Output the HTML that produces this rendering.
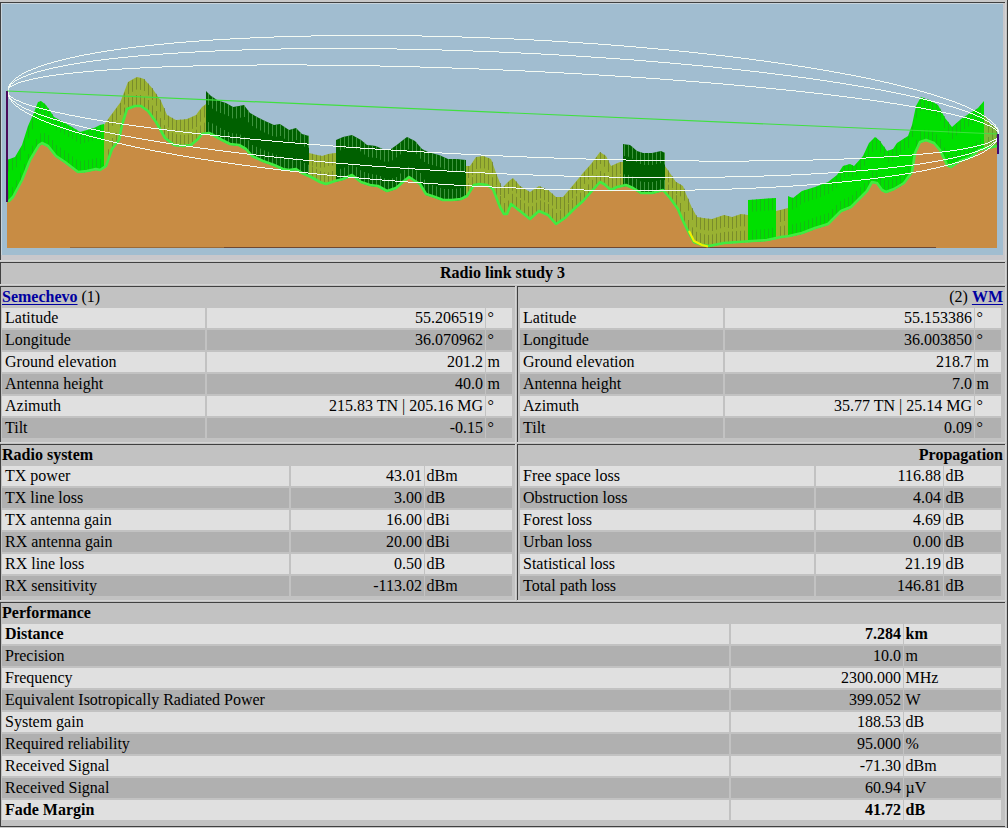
<!DOCTYPE html>
<html><head><meta charset="utf-8"><style>
html,body{margin:0;padding:0}
body{width:1008px;height:828px;position:relative;overflow:hidden;background:#c2c2c2;font-family:"Liberation Serif",serif;font-size:16px;color:#000}
body>div{position:absolute}
.t{white-space:nowrap;overflow:visible}
a{color:#0000a0;font-weight:bold;text-decoration:underline;text-underline-offset:2px}
</style></head><body><div style="left:0px;top:0px;width:1008px;height:2px;background:#c8c8c8"></div><svg width="1008" height="262" style="position:absolute;left:0;top:0"><rect x="1" y="3" width="1004" height="257" fill="#c8c7cb"/><rect x="1" y="3" width="1002" height="252" fill="#c8d4dc"/><rect x="2" y="4" width="1001" height="251" fill="#a1bdd0"/><polygon points="7,248 7,202 9,202 13,198 22,181 30,161 39,146 42,144 48,147 56,157 65,163 78,173 87,172 96,170 100,171 106,167 112,150 119,141 122,126 127,110 135,107 141,107 148,112 156,123 165,139 174,146 183,147 191,146 198,140 202,135 209,134 213,136 222,141 230,145 239,146 246,150 252,157 263,162 274,166 283,170 289,171 296,170 302,174 311,178 320,183 326,185 335,182 343,180 352,176 361,183 370,186 378,187 387,192 396,189 404,182 409,178 415,182 420,185 426,195 435,198 443,201 452,201 461,200 467,197 474,186 480,185 487,186 493,190 500,208 504,215 507,215 511,205 520,212 530,220 539,212 548,216 556,225 565,219 574,210 583,202 591,193 600,183 604,185 611,191 617,188 626,186 633,189 641,194 652,194 663,191 670,199 678,210 680,215 684,224 689,234 694,243 702,246 709,247 724,244 738,243 752,242 767,241 781,238 789,237 802,234 815,229 828,225 841,212 851,208 859,200 867,192 872,183 877,184 882,191 886,193 894,190 904,184 912,173 915,154 920,143 926,141 934,144 940,151 947,166 951,168 960,162 971,158 979,151 988,149 997,147 997,248" fill="#c88c44"/><rect x="70" y="247" width="154" height="1" fill="#9a6a38"/><rect x="224" y="247" width="712" height="1" fill="#704830"/><polygon points="7,160.0 9,159.2 13,157.8 15,157.0 22,145.0 28,126.0 30,121.6 33,115.0 38,102.0 39,101.7 41,101.0 42,101.8 46,105.0 48,108.0 50,111.0 54,117.0 56,118.1 63,122.0 65,123.1 72,127.0 78,130.8 80,132.0 87,130.0 94,128.0 96,127.0 100,125.0 104,124.0 104,168.3 100,171.0 96,170.0 94,170.4 87,172.0 80,172.8 78,173.0 72,168.4 65,163.0 63,161.7 56,157.0 54,154.5 50,149.5 48,147.0 46,146.0 42,144.0 41,144.7 39,146.0 38,147.7 33,156.0 30,161.0 28,166.0 22,181.0 15,194.2 13,198.0 9,202.0 7,202.0" fill="#00e000"/><path d="M8.5,159.6V171.6M8.5,190.0V202.0M12.5,158.1V170.1M12.5,187.0V199.0M16.5,155.3V167.3M16.5,180.3V192.3M20.5,148.4V160.4M20.5,172.8V184.8M24.5,138.7V150.7M24.5,164.0V176.0M28.5,126.0V138.0M28.5,154.0V166.0M32.5,117.2V129.2M32.5,145.7V157.7M36.5,107.2V119.2M36.5,139.0V151.0M40.5,101.3V113.3M40.5,133.3V145.3M44.5,103.4V115.4M44.5,133.0V145.0M48.5,108.0V120.0M48.5,135.0V147.0M52.5,114.0V126.0M52.5,140.0V152.0M56.5,118.1V130.1M56.5,145.0V157.0M60.5,120.3V132.3M60.5,147.7V159.7M64.5,122.6V134.6M64.5,150.3V162.3M68.5,124.8V136.8M68.5,153.3V165.3M72.5,127.0V139.0M72.5,156.4V168.4M76.5,129.5V141.5M76.5,159.5V171.5M80.5,132.0V144.0M80.5,160.8V172.8M84.5,130.9V142.9M84.5,160.3V172.3M88.5,129.7V141.7M88.5,159.8V171.8M92.5,128.6V140.6M92.5,158.9V170.9M96.5,127.0V139.0M96.5,158.0V170.0M100.5,125.0V137.0M100.5,159.0V171.0" stroke="#20a820" stroke-width="1" opacity="0.65"/><polygon points="104,125.0 106,122.1 111,115.0 112,113.7 119,104.3 120,103.0 122,97.8 127,84.6 128,82.0 135,78.1 137,77.0 141,78.1 144,79.0 148,83.5 152,88.0 156,93.8 161,101.0 165,110.3 167,115.0 174,118.9 176,120.0 183,119.4 187,119.0 191,117.2 196,115.0 198,112.3 202,107.0 206,104.0 206,134.4 202,135.0 198,140.0 196,141.7 191,146.0 187,146.5 183,147.0 176,146.2 174,146.0 167,140.6 165,139.0 161,131.9 156,123.0 152,117.5 148,112.0 144,109.1 141,107.0 137,107.0 135,107.0 128,109.6 127,110.0 122,126.0 120,136.0 119,141.0 112,150.0 111,152.8 106,167.0 104,168.3" fill="#9ab232"/><path d="M108.5,119.3V131.3M108.5,149.3V161.3M112.5,113.7V125.7M112.5,138.0V150.0M116.5,108.3V120.3M116.5,132.9V144.9M120.5,103.0V115.0M120.5,124.0V136.0M124.5,92.5V104.5M124.5,107.6V119.6M128.5,82.0V94.0M128.5,97.6V109.6M132.5,79.8V91.8M132.5,96.1V108.1M136.5,77.6V89.6M136.5,95.0V107.0M140.5,77.9V89.9M140.5,95.0V107.0M144.5,79.0V91.0M144.5,97.1V109.1M148.5,83.5V95.5M148.5,100.0V112.0M152.5,88.0V100.0M152.5,105.5V117.5M156.5,93.8V105.8M156.5,111.0V123.0M160.5,99.6V111.6M160.5,118.1V130.1M164.5,108.0V120.0M164.5,125.2V137.2M168.5,115.6V127.6M168.5,129.3V141.3M172.5,117.8V129.8M172.5,132.4V144.4M176.5,120.0V132.0M176.5,134.2V146.2M180.5,119.6V131.6M180.5,134.7V146.7M184.5,119.3V131.3M184.5,134.9V146.9M188.5,118.6V130.6M188.5,134.4V146.4M192.5,116.8V128.8M192.5,133.1V145.1M196.5,115.0V127.0M196.5,129.7V141.7M200.5,109.7V121.7M200.5,125.5V137.5M204.5,105.5V117.5M204.5,122.7V134.7" stroke="#687828" stroke-width="1" opacity="0.65"/><polygon points="206,91.0 209,94.0 211,96.0 213,97.3 217,100.0 222,101.7 226,103.0 230,105.3 233,107.0 239,105.9 244,105.0 246,107.7 250,113.0 252,114.1 257,117.0 263,120.0 265,121.0 274,125.0 280,124.0 283,126.0 289,130.0 296,128.0 302,134.0 309,136.0 309,177.1 302,174.0 296,170.0 289,171.0 283,170.0 280,168.7 274,166.0 265,162.7 263,162.0 257,159.3 252,157.0 250,154.7 246,150.0 244,148.9 239,146.0 233,145.3 230,145.0 226,143.0 222,141.0 217,138.2 213,136.0 211,135.0 209,134.0 206,134.4" fill="#006000"/><path d="M208.5,93.0V105.0M208.5,122.1V134.1M212.5,96.7V108.7M212.5,123.5V135.5M216.5,99.3V111.3M216.5,125.7V137.7M220.5,101.0V113.0M220.5,127.9V139.9M224.5,102.3V114.3M224.5,130.0V142.0M228.5,104.1V116.1M228.5,132.0V144.0M232.5,106.4V118.4M232.5,133.2V145.2M236.5,106.5V118.5M236.5,133.7V145.7M240.5,105.7V117.7M240.5,134.6V146.6M244.5,105.0V117.0M244.5,136.9V148.9M248.5,110.3V122.3M248.5,140.3V152.3M252.5,114.1V126.1M252.5,145.0V157.0M256.5,116.4V128.4M256.5,146.8V158.8M260.5,118.5V130.5M260.5,148.6V160.6M264.5,120.5V132.5M264.5,150.4V162.4M268.5,122.3V134.3M268.5,151.8V163.8M272.5,124.1V136.1M272.5,153.3V165.3M276.5,124.7V136.7M276.5,154.9V166.9M280.5,124.0V136.0M280.5,156.7V168.7M284.5,126.7V138.7M284.5,158.2V170.2M288.5,129.3V141.3M288.5,158.8V170.8M292.5,129.1V141.1M292.5,158.6V170.6M296.5,128.0V140.0M296.5,158.0V170.0M300.5,132.0V144.0M300.5,160.7V172.7M304.5,134.6V146.6M304.5,162.9V174.9M308.5,135.7V147.7M308.5,164.7V176.7" stroke="#60b060" stroke-width="1" opacity="0.65"/><polygon points="309,153.0 311,153.5 317,155.0 320,155.6 322,156.0 326,154.7 328,154.0 335,153.1 336,153.0 336,181.8 335,182.0 328,184.3 326,185.0 322,183.7 320,183.0 317,181.3 311,178.0 309,177.1" fill="#9ab232"/><path d="M312.5,153.8V165.8M312.5,166.6V178.6M316.5,154.8V166.8M316.5,168.8V180.8M320.5,155.6V167.6M320.5,171.0V183.0M324.5,155.3V167.3M324.5,172.3V184.3M328.5,154.0V166.0M328.5,172.3V184.3M332.5,153.5V165.5M332.5,171.0V183.0" stroke="#687828" stroke-width="1" opacity="0.65"/><polygon points="336,140.0 343,137.0 352,135.0 361,140.0 367,145.0 370,145.3 376,146.0 378,146.9 385,150.0 387,149.7 391,149.0 396,145.4 398,144.0 404,139.3 407,137.0 409,138.0 415,141.0 420,146.7 422,149.0 426,151.0 428,152.0 435,153.9 439,155.0 443,156.8 448,159.0 452,159.0 457,159.0 461,159.4 466,160.0 466,197.5 461,200.0 457,200.4 452,201.0 448,201.0 443,201.0 439,199.5 435,198.0 428,195.7 426,195.0 422,188.3 420,185.0 415,182.0 409,178.0 407,179.6 404,182.0 398,187.2 396,189.0 391,190.7 387,192.0 385,190.9 378,187.0 376,186.8 370,186.0 367,185.0 361,183.0 352,176.0 343,180.0 336,181.8" fill="#006000"/><path d="M340.5,138.3V150.3M340.5,168.8V180.8M344.5,136.8V148.8M344.5,167.6V179.6M348.5,135.9V147.9M348.5,165.8V177.8M352.5,135.0V147.0M352.5,164.0V176.0M356.5,137.2V149.2M356.5,167.1V179.1M360.5,139.4V151.4M360.5,170.2V182.2M364.5,142.5V154.5M364.5,172.0V184.0M368.5,145.1V157.1M368.5,173.3V185.3M372.5,145.6V157.6M372.5,174.2V186.2M376.5,146.0V158.0M376.5,174.8V186.8M380.5,147.8V159.8M380.5,176.1V188.1M384.5,149.6V161.6M384.5,178.3V190.3M388.5,149.5V161.5M388.5,179.7V191.7M392.5,148.3V160.3M392.5,178.3V190.3M396.5,145.4V157.4M396.5,177.0V189.0M400.5,142.4V154.4M400.5,173.5V185.5M404.5,139.3V151.3M404.5,170.0V182.0M408.5,137.5V149.5M408.5,166.8V178.8M412.5,139.5V151.5M412.5,168.0V180.0M416.5,142.1V154.1M416.5,170.6V182.6M420.5,146.7V158.7M420.5,173.0V185.0M424.5,150.0V162.0M424.5,179.7V191.7M428.5,152.0V164.0M428.5,183.7V195.7M432.5,153.1V165.1M432.5,185.0V197.0M436.5,154.2V166.2M436.5,186.4V198.4M440.5,155.4V167.4M440.5,187.9V199.9M444.5,157.2V169.2M444.5,189.0V201.0M448.5,159.0V171.0M448.5,189.0V201.0M452.5,159.0V171.0M452.5,189.0V201.0M456.5,159.0V171.0M456.5,188.6V200.6M460.5,159.3V171.3M460.5,188.1V200.1M464.5,159.8V171.8M464.5,186.5V198.5" stroke="#60b060" stroke-width="1" opacity="0.65"/><polygon points="466,166.0 467,166.0 470,166.0 474,160.0 476,157.0 480,156.4 483,156.0 487,157.5 491,159.0 493,164.6 496,173.0 500,183.0 502,188.0 504,186.0 507,183.0 509,181.0 511,179.5 513,178.0 520,186.0 530,192.0 539,186.0 548,190.0 556,197.0 563,197.0 565,194.6 574,184.0 583,173.0 591,164.0 600,152.0 604,154.7 606,156.0 611,166.0 617,163.3 620,162.0 623,162.0 623,186.7 620,187.3 617,188.0 611,191.0 606,186.7 604,185.0 600,183.0 591,193.0 583,202.0 574,210.0 565,219.0 563,220.3 556,225.0 548,216.0 539,212.0 530,220.0 520,212.0 513,206.6 511,205.0 509,210.0 507,215.0 504,215.0 502,211.5 500,208.0 496,197.7 493,190.0 491,188.7 487,186.0 483,185.4 480,185.0 476,185.7 474,186.0 470,192.3 467,197.0 466,197.5" fill="#9ab232"/><path d="M468.5,166.0V178.0M468.5,183.4V195.4M472.5,163.0V175.0M472.5,177.1V189.1M476.5,157.0V169.0M476.5,173.7V185.7M480.5,156.4V168.4M480.5,173.0V185.0M484.5,156.4V168.4M484.5,173.6V185.6M488.5,157.9V169.9M488.5,174.7V186.7M492.5,161.8V173.8M492.5,177.3V189.3M496.5,173.0V185.0M496.5,185.7V197.7M500.5,183.0V195.0M500.5,196.0V208.0M504.5,186.0V198.0M504.5,203.0V215.0M508.5,182.0V194.0M508.5,200.5V212.5M512.5,178.8V190.8M512.5,193.8V205.8M516.5,181.4V193.4M516.5,196.9V208.9M520.5,186.0V198.0M520.5,200.0V212.0M524.5,188.4V200.4M524.5,203.2V215.2M528.5,190.8V202.8M528.5,206.4V218.4M532.5,190.7V202.7M532.5,206.2V218.2M536.5,188.0V200.0M536.5,202.7V214.7M540.5,186.4V198.4M540.5,200.4V212.4M544.5,188.2V200.2M544.5,202.2V214.2M548.5,190.0V202.0M548.5,204.0V216.0M552.5,193.5V205.5M552.5,208.5V220.5M556.5,197.0V209.0M556.5,213.0V225.0M560.5,197.0V209.0M560.5,210.3V222.3M564.5,195.8V219.7M568.5,191.1V203.1M568.5,204.0V216.0M572.5,186.4V198.4M572.5,200.0V212.0M576.5,181.6V193.6M576.5,196.2V208.2M580.5,176.7V188.7M580.5,192.7V204.7M584.5,171.9V183.9M584.5,188.9V200.9M588.5,167.4V179.4M588.5,184.4V196.4M592.5,162.7V174.7M592.5,179.9V191.9M596.5,157.3V169.3M596.5,175.4V187.4M600.5,152.0V164.0M600.5,171.0V183.0M604.5,154.7V166.7M604.5,173.0V185.0M608.5,160.0V172.0M608.5,176.4V188.4M612.5,165.6V177.6M612.5,178.5V190.5M616.5,163.8V175.8M616.5,176.5V188.5M620.5,162.0V174.0M620.5,175.3V187.3" stroke="#687828" stroke-width="1" opacity="0.65"/><polygon points="623,144.0 626,144.4 630,145.0 633,147.6 637,151.0 641,152.3 643,153.0 652,153.0 661,151.0 663,152.0 665,153.0 665,193.3 663,191.0 661,191.5 652,194.0 643,194.0 641,194.0 637,191.5 633,189.0 630,187.7 626,186.0 623,186.7" fill="#006000"/><path d="M624.5,144.1V156.1M624.5,174.4V186.4M628.5,144.7V156.7M628.5,174.9V186.9M632.5,146.7V158.7M632.5,176.6V188.6M636.5,150.1V162.1M636.5,178.9V190.9M640.5,152.0V164.0M640.5,181.4V193.4M644.5,153.0V165.0M644.5,182.0V194.0M648.5,153.0V165.0M648.5,182.0V194.0M652.5,153.0V165.0M652.5,182.0V194.0M656.5,152.1V164.1M656.5,180.9V192.9M660.5,151.2V163.2M660.5,179.8V191.8M664.5,152.5V164.5M664.5,180.1V192.1" stroke="#60b060" stroke-width="1" opacity="0.65"/><polygon points="665,166.0 670,173.3 676,182.0 678,183.1 680,184.3 683,186.0 684,188.7 686,194.0 689,201.0 692,208.0 694,211.6 697,217.0 702,217.8 703,218.0 709,218.7 712,219.0 724,215.0 732,217.0 738,215.0 741,214.0 748,215.0 748,242.3 741,242.8 738,243.0 732,243.4 724,244.0 712,246.4 709,247.0 703,246.1 702,246.0 697,244.1 694,243.0 692,239.4 689,234.0 686,228.0 684,224.0 683,221.8 680,215.0 678,210.0 676,207.2 670,199.0 665,193.3" fill="#9ab232"/><path d="M668.5,170.4V182.4M668.5,184.7V196.7M672.5,176.2V188.2M672.5,189.8V201.8M676.5,182.0V194.0M676.5,195.2V207.2M680.5,184.3V196.3M680.5,203.0V215.0M684.5,188.7V200.7M684.5,212.0V224.0M688.5,198.7V210.7M688.5,220.0V232.0M692.5,208.0V220.0M692.5,227.4V239.4M696.5,215.2V227.2M696.5,231.8V243.8M700.5,217.5V229.5M700.5,233.2V245.2M704.5,218.1V230.1M704.5,234.3V246.3M708.5,218.6V230.6M708.5,234.9V246.9M712.5,219.0V231.0M712.5,234.4V246.4M716.5,217.7V229.7M716.5,233.6V245.6M720.5,216.3V228.3M720.5,232.8V244.8M724.5,215.0V227.0M724.5,232.0V244.0M728.5,216.0V228.0M728.5,231.7V243.7M732.5,217.0V229.0M732.5,231.4V243.4M736.5,215.7V227.7M736.5,231.1V243.1M740.5,214.3V226.3M740.5,230.9V242.9M744.5,214.4V226.4M744.5,230.6V242.6" stroke="#687828" stroke-width="1" opacity="0.65"/><polygon points="748,200.0 752,199.7 767,198.6 776,198.0 776,239.1 767,241.0 752,242.0 748,242.3" fill="#00e000"/><path d="M752.5,199.7V211.7M752.5,230.0V242.0M756.5,199.4V211.4M756.5,229.7V241.7M760.5,199.1V211.1M760.5,229.5V241.5M764.5,198.9V210.9M764.5,229.2V241.2M768.5,198.6V210.6M768.5,228.8V240.8M772.5,198.3V210.3M772.5,227.9V239.9" stroke="#20a820" stroke-width="1" opacity="0.65"/><polygon points="776,211.0 781,209.8 788,208.0 788,237.1 781,238.0 776,239.1" fill="#9ab232"/><path d="M780.5,210.0V222.0M780.5,226.2V238.2M784.5,209.0V221.0M784.5,225.6V237.6" stroke="#687828" stroke-width="1" opacity="0.65"/><polygon points="788,196.0 789,196.4 793,198.0 802,191.0 815,187.0 828,182.0 837,175.0 841,169.0 843,166.0 850,164.0 851,164.5 854,166.0 859,160.4 863,156.0 867,147.3 869,143.0 872,140.0 875,137.0 877,138.6 880,141.0 882,143.9 886,149.6 887,151.0 893,149.0 894,147.5 897,143.0 904,138.5 908,136.0 912,125.0 915,110.8 916,106.0 920,98.8 921,97.0 926,98.9 929,100.0 934,102.8 938,105.0 940,108.7 945,118.0 947,120.6 951,125.7 952,127.0 960,119.9 961,119.0 971,112.6 972,112.0 978,108.0 979,106.8 984,101.0 984,149.9 979,151.0 978,151.9 972,157.1 971,158.0 961,161.6 960,162.0 952,167.3 951,168.0 947,166.0 945,161.7 940,151.0 938,148.7 934,144.0 929,142.1 926,141.0 921,142.7 920,143.0 916,151.8 915,154.0 912,173.0 908,178.5 904,184.0 897,188.2 894,190.0 893,190.4 887,192.6 886,193.0 882,191.0 880,188.2 877,184.0 875,183.6 872,183.0 869,188.4 867,192.0 863,196.0 859,200.0 854,205.0 851,208.0 850,208.4 843,211.2 841,212.0 837,216.0 828,225.0 815,229.0 802,234.0 793,236.1 789,237.0 788,237.1" fill="#00e000"/><path d="M792.5,197.6V209.6M792.5,224.3V236.3M796.5,195.7V207.7M796.5,223.4V235.4M800.5,192.6V204.6M800.5,222.5V234.5M804.5,190.4V202.4M804.5,221.2V233.2M808.5,189.2V201.2M808.5,219.7V231.7M812.5,187.9V199.9M812.5,218.2V230.2M816.5,186.6V198.6M816.5,216.7V228.7M820.5,185.1V197.1M820.5,215.5V227.5M824.5,183.5V195.5M824.5,214.2V226.2M828.5,182.0V194.0M828.5,213.0V225.0M832.5,178.9V190.9M832.5,209.0V221.0M836.5,175.8V187.8M836.5,205.0V217.0M840.5,170.5V182.5M840.5,201.0V213.0M844.5,165.7V177.7M844.5,198.8V210.8M848.5,164.6V176.6M848.5,197.2V209.2M852.5,165.0V177.0M852.5,195.0V207.0M856.5,163.8V175.8M856.5,191.0V203.0M860.5,159.3V171.3M860.5,187.0V199.0M864.5,153.8V165.8M864.5,183.0V195.0M868.5,145.2V157.2M868.5,178.2V190.2M872.5,140.0V152.0M872.5,171.0V183.0M876.5,137.8V149.8M876.5,171.8V183.8M880.5,141.0V153.0M880.5,176.2V188.2M884.5,146.7V158.7M884.5,180.0V192.0M888.5,150.7V162.7M888.5,180.2V192.2M892.5,149.3V161.3M892.5,178.8V190.8M896.5,144.5V156.5M896.5,176.8V188.8M900.5,141.1V153.1M900.5,174.4V186.4M904.5,138.5V150.5M904.5,172.0V184.0M908.5,136.0V148.0M908.5,166.5V178.5M912.5,125.0V137.0M912.5,161.0V173.0M916.5,106.0V118.0M916.5,139.8V151.8M920.5,98.8V110.8M920.5,131.0V143.0M924.5,98.1V110.1M924.5,129.7V141.7M928.5,99.6V111.6M928.5,129.8V141.8M932.5,101.7V113.7M932.5,131.2V143.2M936.5,103.9V115.9M936.5,134.3V146.3M940.5,108.7V120.7M940.5,139.0V151.0M944.5,116.1V128.1M944.5,147.6V159.6M948.5,121.9V133.9M948.5,154.5V166.5M952.5,127.0V139.0M952.5,155.3V167.3M956.5,123.4V135.4M956.5,152.7V164.7M960.5,119.9V131.9M960.5,150.0V162.0M964.5,117.1V129.1M964.5,148.5V160.5M968.5,114.5V126.5M968.5,147.1V159.1M972.5,112.0V124.0M972.5,145.1V157.1M976.5,109.3V121.3M976.5,141.6V153.6M980.5,105.7V117.7M980.5,138.8V150.8" stroke="#20a820" stroke-width="1" opacity="0.65"/><polygon points="984,115.0 988,120.6 989,122.0 997,129.0 997,147.0 989,148.8 988,149.0 984,149.9" fill="#7cb838"/><path d="M988.5,120.6V132.6M988.5,137.0V149.0M992.5,124.6V148.1M996.5,128.1V147.2" stroke="#5c8828" stroke-width="1" opacity="0.65"/><polyline points="7,201 9,201 13,197 22,180 30,160 39,145 42,143 48,146 56,156 65,162 78,172 87,171 96,169 100,170 106,166 112,149 119,140 122,125 127,109 135,106 141,106 148,111 156,122 165,138 174,145 183,146 191,145 198,139 202,134 209,133 213,135 222,140 230,144 239,145 246,149 252,156 263,161 274,165 283,169 289,170 296,169 302,173 311,177 320,182 326,184 335,181 343,179 352,175 361,182 370,185 378,186 387,191 396,188 404,181 409,177 415,181 420,184 426,194 435,197 443,200 452,200 461,199 467,196 474,185 480,184 487,185 493,189 500,207 504,214 507,214 511,204 520,211 530,219 539,211 548,215 556,224 565,218 574,209 583,201 591,192 600,182 604,184 611,190 617,187 626,185 633,188 641,193 652,193 663,190 670,198 678,209 680,214 684,223 689,233 694,242 702,245 709,246 724,243 738,242 752,241 767,240 781,237 789,236 802,233 815,228 828,224 841,211 851,207 859,199 867,191 872,182 877,183 882,190 886,192 894,189 904,183 912,172 915,153 920,142 926,140 934,143 940,150 947,165 951,167 960,161 971,157 979,150 988,148 997,146" fill="none" stroke="#40ec40" stroke-width="2.6" stroke-linejoin="round"/><polyline points="689,231 694,241 702,245 708,246.5" fill="none" stroke="#f0f000" stroke-width="2.2"/><path d="M7,91.5h1M8.5,88.5V91.5M8,88.5h1M9,87.5h1M10,86.5h1M11,86.5h1M12,85.5h1M13,85.5h1M14,84.5h1M15,84.5h1M16,83.5h1M17,83.5h1M18,82.5h1M19,82.5h1M20,82.5h1M21,81.5h1M22,81.5h1M23,81.5h1M24,81.5h1M25,80.5h1M26,80.5h1M27,80.5h1M28,80.5h1M29,79.5h1M30,79.5h1M31,79.5h1M32,79.5h1M33,78.5h1M34,78.5h1M35,78.5h1M36,78.5h1M37,78.5h1M38,77.5h1M39,77.5h1M40,77.5h1M41,77.5h1M42,77.5h1M43,76.5h1M44,76.5h1M45,76.5h1M46,76.5h1M47,76.5h1M48,76.5h1M49,75.5h1M50,75.5h1M51,75.5h1M52,75.5h1M53,75.5h1M54,75.5h1M55,75.5h1M56,74.5h1M57,74.5h1M58,74.5h1M59,74.5h1M60,74.5h1M61,74.5h1M62,74.5h1M63,74.5h1M64,73.5h1M65,73.5h1M66,73.5h1M67,73.5h1M68,73.5h1M69,73.5h1M70,73.5h1M71,73.5h1M72,73.5h1M73,72.5h1M74,72.5h1M75,72.5h1M76,72.5h1M77,72.5h1M78,72.5h1M79,72.5h1M80,72.5h1M81,72.5h1M82,72.5h1M83,71.5h1M84,71.5h1M85,71.5h1M86,71.5h1M87,71.5h1M88,71.5h1M89,71.5h1M90,71.5h1M91,71.5h1M92,71.5h1M93,71.5h1M94,70.5h1M95,70.5h1M96,70.5h1M97,70.5h1M98,70.5h1M99,70.5h1M100,70.5h1M101,70.5h1M102,70.5h1M103,70.5h1M104,70.5h1M105,70.5h1M106,70.5h1M107,69.5h1M108,69.5h1M109,69.5h1M110,69.5h1M111,69.5h1M112,69.5h1M113,69.5h1M114,69.5h1M115,69.5h1M116,69.5h1M117,69.5h1M118,69.5h1M119,69.5h1M120,69.5h1M121,69.5h1M122,68.5h1M123,68.5h1M124,68.5h1M125,68.5h1M126,68.5h1M127,68.5h1M128,68.5h1M129,68.5h1M130,68.5h1M131,68.5h1M132,68.5h1M133,68.5h1M134,68.5h1M135,68.5h1M136,68.5h1M137,68.5h1M138,68.5h1M139,68.5h1M140,67.5h1M141,67.5h1M142,67.5h1M143,67.5h1M144,67.5h1M145,67.5h1M146,67.5h1M147,67.5h1M148,67.5h1M149,67.5h1M150,67.5h1M151,67.5h1M152,67.5h1M153,67.5h1M154,67.5h1M155,67.5h1M156,67.5h1M157,67.5h1M158,67.5h1M159,67.5h1M160,67.5h1M161,67.5h1M162,66.5h1M163,66.5h1M164,66.5h1M165,66.5h1M166,66.5h1M167,66.5h1M168,66.5h1M169,66.5h1M170,66.5h1M171,66.5h1M172,66.5h1M173,66.5h1M174,66.5h1M175,66.5h1M176,66.5h1M177,66.5h1M178,66.5h1M179,66.5h1M180,66.5h1M181,66.5h1M182,66.5h1M183,66.5h1M184,66.5h1M185,66.5h1M186,66.5h1M187,66.5h1M188,66.5h1M189,66.5h1M190,66.5h1M191,66.5h1M192,66.5h1M193,65.5h1M194,65.5h1M195,65.5h1M196,65.5h1M197,65.5h1M198,65.5h1M199,65.5h1M200,65.5h1M201,65.5h1M202,65.5h1M203,65.5h1M204,65.5h1M205,65.5h1M206,65.5h1M207,65.5h1M208,65.5h1M209,65.5h1M210,65.5h1M211,65.5h1M212,65.5h1M213,65.5h1M214,65.5h1M215,65.5h1M216,65.5h1M217,65.5h1M218,65.5h1M219,65.5h1M220,65.5h1M221,65.5h1M222,65.5h1M223,65.5h1M224,65.5h1M225,65.5h1M226,65.5h1M227,65.5h1M228,65.5h1M229,65.5h1M230,65.5h1M231,65.5h1M232,65.5h1M233,65.5h1M234,65.5h1M235,65.5h1M236,65.5h1M237,65.5h1M238,65.5h1M239,65.5h1M240,65.5h1M241,65.5h1M242,65.5h1M243,65.5h1M244,65.5h1M245,65.5h1M246,65.5h1M247,65.5h1M248,65.5h1M249,65.5h1M250,65.5h1M251,65.5h1M252,65.5h1M253,65.5h1M254,65.5h1M255,65.5h1M256,65.5h1M257,64.5h1M258,64.5h1M259,64.5h1M260,64.5h1M261,64.5h1M262,64.5h1M263,64.5h1M264,64.5h1M265,64.5h1M266,64.5h1M267,64.5h1M268,64.5h1M269,64.5h1M270,64.5h1M271,64.5h1M272,64.5h1M273,64.5h1M274,64.5h1M275,64.5h1M276,64.5h1M277,64.5h1M278,64.5h1M279,64.5h1M280,64.5h1M281,64.5h1M282,64.5h1M283,64.5h1M284,64.5h1M285,64.5h1M286,64.5h1M287,64.5h1M288,64.5h1M289,64.5h1M290,64.5h1M291,64.5h1M292,64.5h1M293,64.5h1M294,64.5h1M295,64.5h1M296,64.5h1M297,64.5h1M298,64.5h1M299,64.5h1M300,64.5h1M301,64.5h1M302,64.5h1M303,64.5h1M304,64.5h1M305,64.5h1M306,64.5h1M307,65.5h1M308,65.5h1M309,65.5h1M310,65.5h1M311,65.5h1M312,65.5h1M313,65.5h1M314,65.5h1M315,65.5h1M316,65.5h1M317,65.5h1M318,65.5h1M319,65.5h1M320,65.5h1M321,65.5h1M322,65.5h1M323,65.5h1M324,65.5h1M325,65.5h1M326,65.5h1M327,65.5h1M328,65.5h1M329,65.5h1M330,65.5h1M331,65.5h1M332,65.5h1M333,65.5h1M334,65.5h1M335,65.5h1M336,65.5h1M337,65.5h1M338,65.5h1M339,65.5h1M340,65.5h1M341,65.5h1M342,65.5h1M343,65.5h1M344,65.5h1M345,65.5h1M346,65.5h1M347,65.5h1M348,65.5h1M349,65.5h1M350,65.5h1M351,65.5h1M352,65.5h1M353,65.5h1M354,65.5h1M355,65.5h1M356,65.5h1M357,65.5h1M358,65.5h1M359,65.5h1M360,65.5h1M361,65.5h1M362,65.5h1M363,65.5h1M364,65.5h1M365,65.5h1M366,65.5h1M367,65.5h1M368,65.5h1M369,65.5h1M370,65.5h1M371,65.5h1M372,65.5h1M373,65.5h1M374,65.5h1M375,65.5h1M376,65.5h1M377,65.5h1M378,65.5h1M379,65.5h1M380,66.5h1M381,66.5h1M382,66.5h1M383,66.5h1M384,66.5h1M385,66.5h1M386,66.5h1M387,66.5h1M388,66.5h1M389,66.5h1M390,66.5h1M391,66.5h1M392,66.5h1M393,66.5h1M394,66.5h1M395,66.5h1M396,66.5h1M397,66.5h1M398,66.5h1M399,66.5h1M400,66.5h1M401,66.5h1M402,66.5h1M403,66.5h1M404,66.5h1M405,66.5h1M406,66.5h1M407,66.5h1M408,66.5h1M409,66.5h1M410,66.5h1M411,66.5h1M412,66.5h1M413,66.5h1M414,66.5h1M415,66.5h1M416,66.5h1M417,66.5h1M418,66.5h1M419,66.5h1M420,67.5h1M421,67.5h1M422,67.5h1M423,67.5h1M424,67.5h1M425,67.5h1M426,67.5h1M427,67.5h1M428,67.5h1M429,67.5h1M430,67.5h1M431,67.5h1M432,67.5h1M433,67.5h1M434,67.5h1M435,67.5h1M436,67.5h1M437,67.5h1M438,67.5h1M439,67.5h1M440,67.5h1M441,67.5h1M442,67.5h1M443,67.5h1M444,67.5h1M445,67.5h1M446,67.5h1M447,67.5h1M448,67.5h1M449,67.5h1M450,67.5h1M451,67.5h1M452,68.5h1M453,68.5h1M454,68.5h1M455,68.5h1M456,68.5h1M457,68.5h1M458,68.5h1M459,68.5h1M460,68.5h1M461,68.5h1M462,68.5h1M463,68.5h1M464,68.5h1M465,68.5h1M466,68.5h1M467,68.5h1M468,68.5h1M469,68.5h1M470,68.5h1M471,68.5h1M472,68.5h1M473,68.5h1M474,68.5h1M475,68.5h1M476,68.5h1M477,68.5h1M478,68.5h1M479,69.5h1M480,69.5h1M481,69.5h1M482,69.5h1M483,69.5h1M484,69.5h1M485,69.5h1M486,69.5h1M487,69.5h1M488,69.5h1M489,69.5h1M490,69.5h1M491,69.5h1M492,69.5h1M493,69.5h1M494,69.5h1M495,69.5h1M496,69.5h1M497,69.5h1M498,69.5h1M499,69.5h1M500,69.5h1M501,69.5h1M502,69.5h1M503,70.5h1M504,70.5h1M505,70.5h1M506,70.5h1M507,70.5h1M508,70.5h1M509,70.5h1M510,70.5h1M511,70.5h1M512,70.5h1M513,70.5h1M514,70.5h1M515,70.5h1M516,70.5h1M517,70.5h1M518,70.5h1M519,70.5h1M520,70.5h1M521,70.5h1M522,70.5h1M523,70.5h1M524,70.5h1M525,71.5h1M526,71.5h1M527,71.5h1M528,71.5h1M529,71.5h1M530,71.5h1M531,71.5h1M532,71.5h1M533,71.5h1M534,71.5h1M535,71.5h1M536,71.5h1M537,71.5h1M538,71.5h1M539,71.5h1M540,71.5h1M541,71.5h1M542,71.5h1M543,71.5h1M544,71.5h1M545,72.5h1M546,72.5h1M547,72.5h1M548,72.5h1M549,72.5h1M550,72.5h1M551,72.5h1M552,72.5h1M553,72.5h1M554,72.5h1M555,72.5h1M556,72.5h1M557,72.5h1M558,72.5h1M559,72.5h1M560,72.5h1M561,72.5h1M562,72.5h1M563,72.5h1M564,73.5h1M565,73.5h1M566,73.5h1M567,73.5h1M568,73.5h1M569,73.5h1M570,73.5h1M571,73.5h1M572,73.5h1M573,73.5h1M574,73.5h1M575,73.5h1M576,73.5h1M577,73.5h1M578,73.5h1M579,73.5h1M580,73.5h1M581,73.5h1M582,74.5h1M583,74.5h1M584,74.5h1M585,74.5h1M586,74.5h1M587,74.5h1M588,74.5h1M589,74.5h1M590,74.5h1M591,74.5h1M592,74.5h1M593,74.5h1M594,74.5h1M595,74.5h1M596,74.5h1M597,74.5h1M598,74.5h1M599,75.5h1M600,75.5h1M601,75.5h1M602,75.5h1M603,75.5h1M604,75.5h1M605,75.5h1M606,75.5h1M607,75.5h1M608,75.5h1M609,75.5h1M610,75.5h1M611,75.5h1M612,75.5h1M613,75.5h1M614,75.5h1M615,76.5h1M616,76.5h1M617,76.5h1M618,76.5h1M619,76.5h1M620,76.5h1M621,76.5h1M622,76.5h1M623,76.5h1M624,76.5h1M625,76.5h1M626,76.5h1M627,76.5h1M628,76.5h1M629,76.5h1M630,76.5h1M631,77.5h1M632,77.5h1M633,77.5h1M634,77.5h1M635,77.5h1M636,77.5h1M637,77.5h1M638,77.5h1M639,77.5h1M640,77.5h1M641,77.5h1M642,77.5h1M643,77.5h1M644,77.5h1M645,77.5h1M646,78.5h1M647,78.5h1M648,78.5h1M649,78.5h1M650,78.5h1M651,78.5h1M652,78.5h1M653,78.5h1M654,78.5h1M655,78.5h1M656,78.5h1M657,78.5h1M658,78.5h1M659,78.5h1M660,79.5h1M661,79.5h1M662,79.5h1M663,79.5h1M664,79.5h1M665,79.5h1M666,79.5h1M667,79.5h1M668,79.5h1M669,79.5h1M670,79.5h1M671,79.5h1M672,79.5h1M673,80.5h1M674,80.5h1M675,80.5h1M676,80.5h1M677,80.5h1M678,80.5h1M679,80.5h1M680,80.5h1M681,80.5h1M682,80.5h1M683,80.5h1M684,80.5h1M685,80.5h1M686,81.5h1M687,81.5h1M688,81.5h1M689,81.5h1M690,81.5h1M691,81.5h1M692,81.5h1M693,81.5h1M694,81.5h1M695,81.5h1M696,81.5h1M697,81.5h1M698,81.5h1M699,82.5h1M700,82.5h1M701,82.5h1M702,82.5h1M703,82.5h1M704,82.5h1M705,82.5h1M706,82.5h1M707,82.5h1M708,82.5h1M709,82.5h1M710,82.5h1M711,83.5h1M712,83.5h1M713,83.5h1M714,83.5h1M715,83.5h1M716,83.5h1M717,83.5h1M718,83.5h1M719,83.5h1M720,83.5h1M721,83.5h1M722,83.5h1M723,84.5h1M724,84.5h1M725,84.5h1M726,84.5h1M727,84.5h1M728,84.5h1M729,84.5h1M730,84.5h1M731,84.5h1M732,84.5h1M733,84.5h1M734,85.5h1M735,85.5h1M736,85.5h1M737,85.5h1M738,85.5h1M739,85.5h1M740,85.5h1M741,85.5h1M742,85.5h1M743,85.5h1M744,85.5h1M745,86.5h1M746,86.5h1M747,86.5h1M748,86.5h1M749,86.5h1M750,86.5h1M751,86.5h1M752,86.5h1M753,86.5h1M754,86.5h1M755,86.5h1M756,87.5h1M757,87.5h1M758,87.5h1M759,87.5h1M760,87.5h1M761,87.5h1M762,87.5h1M763,87.5h1M764,87.5h1M765,87.5h1M766,88.5h1M767,88.5h1M768,88.5h1M769,88.5h1M770,88.5h1M771,88.5h1M772,88.5h1M773,88.5h1M774,88.5h1M775,88.5h1M776,89.5h1M777,89.5h1M778,89.5h1M779,89.5h1M780,89.5h1M781,89.5h1M782,89.5h1M783,89.5h1M784,89.5h1M785,89.5h1M786,90.5h1M787,90.5h1M788,90.5h1M789,90.5h1M790,90.5h1M791,90.5h1M792,90.5h1M793,90.5h1M794,90.5h1M795,90.5h1M796,91.5h1M797,91.5h1M798,91.5h1M799,91.5h1M800,91.5h1M801,91.5h1M802,91.5h1M803,91.5h1M804,91.5h1M805,92.5h1M806,92.5h1M807,92.5h1M808,92.5h1M809,92.5h1M810,92.5h1M811,92.5h1M812,92.5h1M813,92.5h1M814,93.5h1M815,93.5h1M816,93.5h1M817,93.5h1M818,93.5h1M819,93.5h1M820,93.5h1M821,93.5h1M822,93.5h1M823,94.5h1M824,94.5h1M825,94.5h1M826,94.5h1M827,94.5h1M828,94.5h1M829,94.5h1M830,94.5h1M831,95.5h1M832,95.5h1M833,95.5h1M834,95.5h1M835,95.5h1M836,95.5h1M837,95.5h1M838,95.5h1M839,96.5h1M840,96.5h1M841,96.5h1M842,96.5h1M843,96.5h1M844,96.5h1M845,96.5h1M846,96.5h1M847,97.5h1M848,97.5h1M849,97.5h1M850,97.5h1M851,97.5h1M852,97.5h1M853,97.5h1M854,97.5h1M855,98.5h1M856,98.5h1M857,98.5h1M858,98.5h1M859,98.5h1M860,98.5h1M861,98.5h1M862,99.5h1M863,99.5h1M864,99.5h1M865,99.5h1M866,99.5h1M867,99.5h1M868,99.5h1M869,99.5h1M870,100.5h1M871,100.5h1M872,100.5h1M873,100.5h1M874,100.5h1M875,100.5h1M876,100.5h1M877,101.5h1M878,101.5h1M879,101.5h1M880,101.5h1M881,101.5h1M882,101.5h1M883,101.5h1M884,102.5h1M885,102.5h1M886,102.5h1M887,102.5h1M888,102.5h1M889,102.5h1M890,103.5h1M891,103.5h1M892,103.5h1M893,103.5h1M894,103.5h1M895,103.5h1M896,103.5h1M897,104.5h1M898,104.5h1M899,104.5h1M900,104.5h1M901,104.5h1M902,104.5h1M903,105.5h1M904,105.5h1M905,105.5h1M906,105.5h1M907,105.5h1M908,105.5h1M909,106.5h1M910,106.5h1M911,106.5h1M912,106.5h1M913,106.5h1M914,106.5h1M915,107.5h1M916,107.5h1M917,107.5h1M918,107.5h1M919,107.5h1M920,107.5h1M921,108.5h1M922,108.5h1M923,108.5h1M924,108.5h1M925,108.5h1M926,109.5h1M927,109.5h1M928,109.5h1M929,109.5h1M930,109.5h1M931,110.5h1M932,110.5h1M933,110.5h1M934,110.5h1M935,110.5h1M936,110.5h1M937,111.5h1M938,111.5h1M939,111.5h1M940,111.5h1M941,112.5h1M942,112.5h1M943,112.5h1M944,112.5h1M945,112.5h1M946,113.5h1M947,113.5h1M948,113.5h1M949,113.5h1M950,113.5h1M951,114.5h1M952,114.5h1M953,114.5h1M954,114.5h1M955,115.5h1M956,115.5h1M957,115.5h1M958,115.5h1M959,116.5h1M960,116.5h1M961,116.5h1M962,116.5h1M963,117.5h1M964,117.5h1M965,117.5h1M966,117.5h1M967,118.5h1M968,118.5h1M969,118.5h1M970,119.5h1M971,119.5h1M972,119.5h1M973,119.5h1M974,120.5h1M975,120.5h1M976,120.5h1M977,121.5h1M978,121.5h1M979,121.5h1M980,122.5h1M981,122.5h1M982,122.5h1M983,123.5h1M984,123.5h1M985,124.5h1M986,124.5h1M987,125.5h1M988,125.5h1M989,125.5h1M990,126.5h1M991,126.5h1M992,127.5h1M993,128.5h1M994,128.5h1M995,129.5h1M996,130.5h1M997,131.5h1M998.5,131.5V134.5M998,134.5h1" fill="none" stroke="#f4fbf4" stroke-width="1"/><path d="M7,91.5h1M8.5,91.5V94.5M8,94.5h1M9,95.5h1M10,96.5h1M11,97.5h1M12,97.5h1M13,98.5h1M14,99.5h1M15,99.5h1M16,100.5h1M17,100.5h1M18,100.5h1M19,101.5h1M20,101.5h1M21,102.5h1M22,102.5h1M23,103.5h1M24,103.5h1M25,103.5h1M26,104.5h1M27,104.5h1M28,104.5h1M29,105.5h1M30,105.5h1M31,105.5h1M32,106.5h1M33,106.5h1M34,106.5h1M35,106.5h1M36,107.5h1M37,107.5h1M38,107.5h1M39,108.5h1M40,108.5h1M41,108.5h1M42,108.5h1M43,109.5h1M44,109.5h1M45,109.5h1M46,109.5h1M47,110.5h1M48,110.5h1M49,110.5h1M50,110.5h1M51,111.5h1M52,111.5h1M53,111.5h1M54,111.5h1M55,112.5h1M56,112.5h1M57,112.5h1M58,112.5h1M59,112.5h1M60,113.5h1M61,113.5h1M62,113.5h1M63,113.5h1M64,113.5h1M65,114.5h1M66,114.5h1M67,114.5h1M68,114.5h1M69,115.5h1M70,115.5h1M71,115.5h1M72,115.5h1M73,115.5h1M74,115.5h1M75,116.5h1M76,116.5h1M77,116.5h1M78,116.5h1M79,116.5h1M80,117.5h1M81,117.5h1M82,117.5h1M83,117.5h1M84,117.5h1M85,118.5h1M86,118.5h1M87,118.5h1M88,118.5h1M89,118.5h1M90,118.5h1M91,119.5h1M92,119.5h1M93,119.5h1M94,119.5h1M95,119.5h1M96,119.5h1M97,120.5h1M98,120.5h1M99,120.5h1M100,120.5h1M101,120.5h1M102,120.5h1M103,121.5h1M104,121.5h1M105,121.5h1M106,121.5h1M107,121.5h1M108,121.5h1M109,122.5h1M110,122.5h1M111,122.5h1M112,122.5h1M113,122.5h1M114,122.5h1M115,122.5h1M116,123.5h1M117,123.5h1M118,123.5h1M119,123.5h1M120,123.5h1M121,123.5h1M122,124.5h1M123,124.5h1M124,124.5h1M125,124.5h1M126,124.5h1M127,124.5h1M128,124.5h1M129,125.5h1M130,125.5h1M131,125.5h1M132,125.5h1M133,125.5h1M134,125.5h1M135,125.5h1M136,126.5h1M137,126.5h1M138,126.5h1M139,126.5h1M140,126.5h1M141,126.5h1M142,126.5h1M143,126.5h1M144,127.5h1M145,127.5h1M146,127.5h1M147,127.5h1M148,127.5h1M149,127.5h1M150,127.5h1M151,128.5h1M152,128.5h1M153,128.5h1M154,128.5h1M155,128.5h1M156,128.5h1M157,128.5h1M158,128.5h1M159,129.5h1M160,129.5h1M161,129.5h1M162,129.5h1M163,129.5h1M164,129.5h1M165,129.5h1M166,129.5h1M167,130.5h1M168,130.5h1M169,130.5h1M170,130.5h1M171,130.5h1M172,130.5h1M173,130.5h1M174,130.5h1M175,131.5h1M176,131.5h1M177,131.5h1M178,131.5h1M179,131.5h1M180,131.5h1M181,131.5h1M182,131.5h1M183,132.5h1M184,132.5h1M185,132.5h1M186,132.5h1M187,132.5h1M188,132.5h1M189,132.5h1M190,132.5h1M191,132.5h1M192,133.5h1M193,133.5h1M194,133.5h1M195,133.5h1M196,133.5h1M197,133.5h1M198,133.5h1M199,133.5h1M200,133.5h1M201,134.5h1M202,134.5h1M203,134.5h1M204,134.5h1M205,134.5h1M206,134.5h1M207,134.5h1M208,134.5h1M209,134.5h1M210,135.5h1M211,135.5h1M212,135.5h1M213,135.5h1M214,135.5h1M215,135.5h1M216,135.5h1M217,135.5h1M218,135.5h1M219,135.5h1M220,136.5h1M221,136.5h1M222,136.5h1M223,136.5h1M224,136.5h1M225,136.5h1M226,136.5h1M227,136.5h1M228,136.5h1M229,136.5h1M230,137.5h1M231,137.5h1M232,137.5h1M233,137.5h1M234,137.5h1M235,137.5h1M236,137.5h1M237,137.5h1M238,137.5h1M239,137.5h1M240,138.5h1M241,138.5h1M242,138.5h1M243,138.5h1M244,138.5h1M245,138.5h1M246,138.5h1M247,138.5h1M248,138.5h1M249,138.5h1M250,139.5h1M251,139.5h1M252,139.5h1M253,139.5h1M254,139.5h1M255,139.5h1M256,139.5h1M257,139.5h1M258,139.5h1M259,139.5h1M260,139.5h1M261,140.5h1M262,140.5h1M263,140.5h1M264,140.5h1M265,140.5h1M266,140.5h1M267,140.5h1M268,140.5h1M269,140.5h1M270,140.5h1M271,140.5h1M272,141.5h1M273,141.5h1M274,141.5h1M275,141.5h1M276,141.5h1M277,141.5h1M278,141.5h1M279,141.5h1M280,141.5h1M281,141.5h1M282,141.5h1M283,142.5h1M284,142.5h1M285,142.5h1M286,142.5h1M287,142.5h1M288,142.5h1M289,142.5h1M290,142.5h1M291,142.5h1M292,142.5h1M293,142.5h1M294,142.5h1M295,143.5h1M296,143.5h1M297,143.5h1M298,143.5h1M299,143.5h1M300,143.5h1M301,143.5h1M302,143.5h1M303,143.5h1M304,143.5h1M305,143.5h1M306,143.5h1M307,144.5h1M308,144.5h1M309,144.5h1M310,144.5h1M311,144.5h1M312,144.5h1M313,144.5h1M314,144.5h1M315,144.5h1M316,144.5h1M317,144.5h1M318,144.5h1M319,144.5h1M320,145.5h1M321,145.5h1M322,145.5h1M323,145.5h1M324,145.5h1M325,145.5h1M326,145.5h1M327,145.5h1M328,145.5h1M329,145.5h1M330,145.5h1M331,145.5h1M332,145.5h1M333,146.5h1M334,146.5h1M335,146.5h1M336,146.5h1M337,146.5h1M338,146.5h1M339,146.5h1M340,146.5h1M341,146.5h1M342,146.5h1M343,146.5h1M344,146.5h1M345,146.5h1M346,147.5h1M347,147.5h1M348,147.5h1M349,147.5h1M350,147.5h1M351,147.5h1M352,147.5h1M353,147.5h1M354,147.5h1M355,147.5h1M356,147.5h1M357,147.5h1M358,147.5h1M359,147.5h1M360,148.5h1M361,148.5h1M362,148.5h1M363,148.5h1M364,148.5h1M365,148.5h1M366,148.5h1M367,148.5h1M368,148.5h1M369,148.5h1M370,148.5h1M371,148.5h1M372,148.5h1M373,148.5h1M374,148.5h1M375,149.5h1M376,149.5h1M377,149.5h1M378,149.5h1M379,149.5h1M380,149.5h1M381,149.5h1M382,149.5h1M383,149.5h1M384,149.5h1M385,149.5h1M386,149.5h1M387,149.5h1M388,149.5h1M389,149.5h1M390,149.5h1M391,150.5h1M392,150.5h1M393,150.5h1M394,150.5h1M395,150.5h1M396,150.5h1M397,150.5h1M398,150.5h1M399,150.5h1M400,150.5h1M401,150.5h1M402,150.5h1M403,150.5h1M404,150.5h1M405,150.5h1M406,150.5h1M407,151.5h1M408,151.5h1M409,151.5h1M410,151.5h1M411,151.5h1M412,151.5h1M413,151.5h1M414,151.5h1M415,151.5h1M416,151.5h1M417,151.5h1M418,151.5h1M419,151.5h1M420,151.5h1M421,151.5h1M422,151.5h1M423,151.5h1M424,152.5h1M425,152.5h1M426,152.5h1M427,152.5h1M428,152.5h1M429,152.5h1M430,152.5h1M431,152.5h1M432,152.5h1M433,152.5h1M434,152.5h1M435,152.5h1M436,152.5h1M437,152.5h1M438,152.5h1M439,152.5h1M440,152.5h1M441,152.5h1M442,153.5h1M443,153.5h1M444,153.5h1M445,153.5h1M446,153.5h1M447,153.5h1M448,153.5h1M449,153.5h1M450,153.5h1M451,153.5h1M452,153.5h1M453,153.5h1M454,153.5h1M455,153.5h1M456,153.5h1M457,153.5h1M458,153.5h1M459,153.5h1M460,153.5h1M461,154.5h1M462,154.5h1M463,154.5h1M464,154.5h1M465,154.5h1M466,154.5h1M467,154.5h1M468,154.5h1M469,154.5h1M470,154.5h1M471,154.5h1M472,154.5h1M473,154.5h1M474,154.5h1M475,154.5h1M476,154.5h1M477,154.5h1M478,154.5h1M479,154.5h1M480,154.5h1M481,155.5h1M482,155.5h1M483,155.5h1M484,155.5h1M485,155.5h1M486,155.5h1M487,155.5h1M488,155.5h1M489,155.5h1M490,155.5h1M491,155.5h1M492,155.5h1M493,155.5h1M494,155.5h1M495,155.5h1M496,155.5h1M497,155.5h1M498,155.5h1M499,155.5h1M500,155.5h1M501,155.5h1M502,155.5h1M503,156.5h1M504,156.5h1M505,156.5h1M506,156.5h1M507,156.5h1M508,156.5h1M509,156.5h1M510,156.5h1M511,156.5h1M512,156.5h1M513,156.5h1M514,156.5h1M515,156.5h1M516,156.5h1M517,156.5h1M518,156.5h1M519,156.5h1M520,156.5h1M521,156.5h1M522,156.5h1M523,156.5h1M524,156.5h1M525,156.5h1M526,156.5h1M527,157.5h1M528,157.5h1M529,157.5h1M530,157.5h1M531,157.5h1M532,157.5h1M533,157.5h1M534,157.5h1M535,157.5h1M536,157.5h1M537,157.5h1M538,157.5h1M539,157.5h1M540,157.5h1M541,157.5h1M542,157.5h1M543,157.5h1M544,157.5h1M545,157.5h1M546,157.5h1M547,157.5h1M548,157.5h1M549,157.5h1M550,157.5h1M551,157.5h1M552,157.5h1M553,157.5h1M554,158.5h1M555,158.5h1M556,158.5h1M557,158.5h1M558,158.5h1M559,158.5h1M560,158.5h1M561,158.5h1M562,158.5h1M563,158.5h1M564,158.5h1M565,158.5h1M566,158.5h1M567,158.5h1M568,158.5h1M569,158.5h1M570,158.5h1M571,158.5h1M572,158.5h1M573,158.5h1M574,158.5h1M575,158.5h1M576,158.5h1M577,158.5h1M578,158.5h1M579,158.5h1M580,158.5h1M581,158.5h1M582,158.5h1M583,158.5h1M584,158.5h1M585,158.5h1M586,159.5h1M587,159.5h1M588,159.5h1M589,159.5h1M590,159.5h1M591,159.5h1M592,159.5h1M593,159.5h1M594,159.5h1M595,159.5h1M596,159.5h1M597,159.5h1M598,159.5h1M599,159.5h1M600,159.5h1M601,159.5h1M602,159.5h1M603,159.5h1M604,159.5h1M605,159.5h1M606,159.5h1M607,159.5h1M608,159.5h1M609,159.5h1M610,159.5h1M611,159.5h1M612,159.5h1M613,159.5h1M614,159.5h1M615,159.5h1M616,159.5h1M617,159.5h1M618,159.5h1M619,159.5h1M620,159.5h1M621,159.5h1M622,159.5h1M623,159.5h1M624,159.5h1M625,159.5h1M626,160.5h1M627,160.5h1M628,160.5h1M629,160.5h1M630,160.5h1M631,160.5h1M632,160.5h1M633,160.5h1M634,160.5h1M635,160.5h1M636,160.5h1M637,160.5h1M638,160.5h1M639,160.5h1M640,160.5h1M641,160.5h1M642,160.5h1M643,160.5h1M644,160.5h1M645,160.5h1M646,160.5h1M647,160.5h1M648,160.5h1M649,160.5h1M650,160.5h1M651,160.5h1M652,160.5h1M653,160.5h1M654,160.5h1M655,160.5h1M656,160.5h1M657,160.5h1M658,160.5h1M659,160.5h1M660,160.5h1M661,160.5h1M662,160.5h1M663,160.5h1M664,160.5h1M665,160.5h1M666,160.5h1M667,160.5h1M668,160.5h1M669,160.5h1M670,160.5h1M671,160.5h1M672,160.5h1M673,160.5h1M674,160.5h1M675,160.5h1M676,160.5h1M677,160.5h1M678,160.5h1M679,160.5h1M680,160.5h1M681,160.5h1M682,160.5h1M683,160.5h1M684,160.5h1M685,160.5h1M686,160.5h1M687,160.5h1M688,160.5h1M689,160.5h1M690,160.5h1M691,160.5h1M692,160.5h1M693,160.5h1M694,160.5h1M695,160.5h1M696,160.5h1M697,160.5h1M698,160.5h1M699,161.5h1M700,161.5h1M701,161.5h1M702,161.5h1M703,161.5h1M704,161.5h1M705,161.5h1M706,161.5h1M707,161.5h1M708,161.5h1M709,161.5h1M710,161.5h1M711,161.5h1M712,161.5h1M713,161.5h1M714,161.5h1M715,161.5h1M716,161.5h1M717,161.5h1M718,161.5h1M719,161.5h1M720,161.5h1M721,161.5h1M722,161.5h1M723,161.5h1M724,161.5h1M725,161.5h1M726,161.5h1M727,161.5h1M728,161.5h1M729,161.5h1M730,161.5h1M731,161.5h1M732,161.5h1M733,161.5h1M734,161.5h1M735,161.5h1M736,161.5h1M737,161.5h1M738,161.5h1M739,161.5h1M740,161.5h1M741,161.5h1M742,161.5h1M743,161.5h1M744,161.5h1M745,161.5h1M746,161.5h1M747,161.5h1M748,161.5h1M749,160.5h1M750,160.5h1M751,160.5h1M752,160.5h1M753,160.5h1M754,160.5h1M755,160.5h1M756,160.5h1M757,160.5h1M758,160.5h1M759,160.5h1M760,160.5h1M761,160.5h1M762,160.5h1M763,160.5h1M764,160.5h1M765,160.5h1M766,160.5h1M767,160.5h1M768,160.5h1M769,160.5h1M770,160.5h1M771,160.5h1M772,160.5h1M773,160.5h1M774,160.5h1M775,160.5h1M776,160.5h1M777,160.5h1M778,160.5h1M779,160.5h1M780,160.5h1M781,160.5h1M782,160.5h1M783,160.5h1M784,160.5h1M785,160.5h1M786,160.5h1M787,160.5h1M788,160.5h1M789,160.5h1M790,160.5h1M791,160.5h1M792,160.5h1M793,160.5h1M794,160.5h1M795,160.5h1M796,160.5h1M797,160.5h1M798,160.5h1M799,160.5h1M800,160.5h1M801,160.5h1M802,160.5h1M803,160.5h1M804,160.5h1M805,160.5h1M806,160.5h1M807,160.5h1M808,160.5h1M809,160.5h1M810,160.5h1M811,160.5h1M812,160.5h1M813,159.5h1M814,159.5h1M815,159.5h1M816,159.5h1M817,159.5h1M818,159.5h1M819,159.5h1M820,159.5h1M821,159.5h1M822,159.5h1M823,159.5h1M824,159.5h1M825,159.5h1M826,159.5h1M827,159.5h1M828,159.5h1M829,159.5h1M830,159.5h1M831,159.5h1M832,159.5h1M833,159.5h1M834,159.5h1M835,159.5h1M836,159.5h1M837,159.5h1M838,159.5h1M839,159.5h1M840,159.5h1M841,159.5h1M842,159.5h1M843,159.5h1M844,158.5h1M845,158.5h1M846,158.5h1M847,158.5h1M848,158.5h1M849,158.5h1M850,158.5h1M851,158.5h1M852,158.5h1M853,158.5h1M854,158.5h1M855,158.5h1M856,158.5h1M857,158.5h1M858,158.5h1M859,158.5h1M860,158.5h1M861,158.5h1M862,158.5h1M863,158.5h1M864,158.5h1M865,158.5h1M866,157.5h1M867,157.5h1M868,157.5h1M869,157.5h1M870,157.5h1M871,157.5h1M872,157.5h1M873,157.5h1M874,157.5h1M875,157.5h1M876,157.5h1M877,157.5h1M878,157.5h1M879,157.5h1M880,157.5h1M881,157.5h1M882,157.5h1M883,157.5h1M884,156.5h1M885,156.5h1M886,156.5h1M887,156.5h1M888,156.5h1M889,156.5h1M890,156.5h1M891,156.5h1M892,156.5h1M893,156.5h1M894,156.5h1M895,156.5h1M896,156.5h1M897,156.5h1M898,156.5h1M899,155.5h1M900,155.5h1M901,155.5h1M902,155.5h1M903,155.5h1M904,155.5h1M905,155.5h1M906,155.5h1M907,155.5h1M908,155.5h1M909,155.5h1M910,155.5h1M911,155.5h1M912,154.5h1M913,154.5h1M914,154.5h1M915,154.5h1M916,154.5h1M917,154.5h1M918,154.5h1M919,154.5h1M920,154.5h1M921,154.5h1M922,154.5h1M923,153.5h1M924,153.5h1M925,153.5h1M926,153.5h1M927,153.5h1M928,153.5h1M929,153.5h1M930,153.5h1M931,153.5h1M932,153.5h1M933,152.5h1M934,152.5h1M935,152.5h1M936,152.5h1M937,152.5h1M938,152.5h1M939,152.5h1M940,152.5h1M941,152.5h1M942,151.5h1M943,151.5h1M944,151.5h1M945,151.5h1M946,151.5h1M947,151.5h1M948,151.5h1M949,151.5h1M950,150.5h1M951,150.5h1M952,150.5h1M953,150.5h1M954,150.5h1M955,150.5h1M956,150.5h1M957,149.5h1M958,149.5h1M959,149.5h1M960,149.5h1M961,149.5h1M962,149.5h1M963,148.5h1M964,148.5h1M965,148.5h1M966,148.5h1M967,148.5h1M968,147.5h1M969,147.5h1M970,147.5h1M971,147.5h1M972,147.5h1M973,146.5h1M974,146.5h1M975,146.5h1M976,146.5h1M977,145.5h1M978,145.5h1M979,145.5h1M980,145.5h1M981,144.5h1M982,144.5h1M983,144.5h1M984,144.5h1M985,143.5h1M986,143.5h1M987,143.5h1M988,142.5h1M989,142.5h1M990,141.5h1M991,141.5h1M992,140.5h1M993,140.5h1M994,139.5h1M995,139.5h1M996,138.5h1M997,137.5h1M998.5,134.5V137.5M998,134.5h1" fill="none" stroke="#f4fbf4" stroke-width="1"/><path d="M7,91.5h1M8.5,87.5V91.5M8,87.5h1M9,86.5h1M10.5,84.5V86.5M10,84.5h1M11,83.5h1M12,83.5h1M13,82.5h1M14,81.5h1M15,80.5h1M16,80.5h1M17,79.5h1M18,79.5h1M19,78.5h1M20,78.5h1M21,77.5h1M22,77.5h1M23,76.5h1M24,76.5h1M25,76.5h1M26,75.5h1M27,75.5h1M28,74.5h1M29,74.5h1M30,74.5h1M31,73.5h1M32,73.5h1M33,73.5h1M34,72.5h1M35,72.5h1M36,72.5h1M37,71.5h1M38,71.5h1M39,71.5h1M40,71.5h1M41,70.5h1M42,70.5h1M43,70.5h1M44,70.5h1M45,69.5h1M46,69.5h1M47,69.5h1M48,69.5h1M49,68.5h1M50,68.5h1M51,68.5h1M52,68.5h1M53,67.5h1M54,67.5h1M55,67.5h1M56,67.5h1M57,67.5h1M58,66.5h1M59,66.5h1M60,66.5h1M61,66.5h1M62,66.5h1M63,65.5h1M64,65.5h1M65,65.5h1M66,65.5h1M67,65.5h1M68,64.5h1M69,64.5h1M70,64.5h1M71,64.5h1M72,64.5h1M73,64.5h1M74,63.5h1M75,63.5h1M76,63.5h1M77,63.5h1M78,63.5h1M79,63.5h1M80,62.5h1M81,62.5h1M82,62.5h1M83,62.5h1M84,62.5h1M85,62.5h1M86,61.5h1M87,61.5h1M88,61.5h1M89,61.5h1M90,61.5h1M91,61.5h1M92,61.5h1M93,60.5h1M94,60.5h1M95,60.5h1M96,60.5h1M97,60.5h1M98,60.5h1M99,60.5h1M100,60.5h1M101,59.5h1M102,59.5h1M103,59.5h1M104,59.5h1M105,59.5h1M106,59.5h1M107,59.5h1M108,59.5h1M109,58.5h1M110,58.5h1M111,58.5h1M112,58.5h1M113,58.5h1M114,58.5h1M115,58.5h1M116,58.5h1M117,58.5h1M118,57.5h1M119,57.5h1M120,57.5h1M121,57.5h1M122,57.5h1M123,57.5h1M124,57.5h1M125,57.5h1M126,57.5h1M127,57.5h1M128,56.5h1M129,56.5h1M130,56.5h1M131,56.5h1M132,56.5h1M133,56.5h1M134,56.5h1M135,56.5h1M136,56.5h1M137,56.5h1M138,55.5h1M139,55.5h1M140,55.5h1M141,55.5h1M142,55.5h1M143,55.5h1M144,55.5h1M145,55.5h1M146,55.5h1M147,55.5h1M148,55.5h1M149,55.5h1M150,54.5h1M151,54.5h1M152,54.5h1M153,54.5h1M154,54.5h1M155,54.5h1M156,54.5h1M157,54.5h1M158,54.5h1M159,54.5h1M160,54.5h1M161,54.5h1M162,54.5h1M163,53.5h1M164,53.5h1M165,53.5h1M166,53.5h1M167,53.5h1M168,53.5h1M169,53.5h1M170,53.5h1M171,53.5h1M172,53.5h1M173,53.5h1M174,53.5h1M175,53.5h1M176,53.5h1M177,53.5h1M178,52.5h1M179,52.5h1M180,52.5h1M181,52.5h1M182,52.5h1M183,52.5h1M184,52.5h1M185,52.5h1M186,52.5h1M187,52.5h1M188,52.5h1M189,52.5h1M190,52.5h1M191,52.5h1M192,52.5h1M193,52.5h1M194,52.5h1M195,51.5h1M196,51.5h1M197,51.5h1M198,51.5h1M199,51.5h1M200,51.5h1M201,51.5h1M202,51.5h1M203,51.5h1M204,51.5h1M205,51.5h1M206,51.5h1M207,51.5h1M208,51.5h1M209,51.5h1M210,51.5h1M211,51.5h1M212,51.5h1M213,51.5h1M214,51.5h1M215,50.5h1M216,50.5h1M217,50.5h1M218,50.5h1M219,50.5h1M220,50.5h1M221,50.5h1M222,50.5h1M223,50.5h1M224,50.5h1M225,50.5h1M226,50.5h1M227,50.5h1M228,50.5h1M229,50.5h1M230,50.5h1M231,50.5h1M232,50.5h1M233,50.5h1M234,50.5h1M235,50.5h1M236,50.5h1M237,50.5h1M238,50.5h1M239,50.5h1M240,50.5h1M241,50.5h1M242,49.5h1M243,49.5h1M244,49.5h1M245,49.5h1M246,49.5h1M247,49.5h1M248,49.5h1M249,49.5h1M250,49.5h1M251,49.5h1M252,49.5h1M253,49.5h1M254,49.5h1M255,49.5h1M256,49.5h1M257,49.5h1M258,49.5h1M259,49.5h1M260,49.5h1M261,49.5h1M262,49.5h1M263,49.5h1M264,49.5h1M265,49.5h1M266,49.5h1M267,49.5h1M268,49.5h1M269,49.5h1M270,49.5h1M271,49.5h1M272,49.5h1M273,49.5h1M274,49.5h1M275,49.5h1M276,49.5h1M277,49.5h1M278,49.5h1M279,49.5h1M280,49.5h1M281,48.5h1M282,48.5h1M283,48.5h1M284,48.5h1M285,48.5h1M286,48.5h1M287,48.5h1M288,48.5h1M289,48.5h1M290,48.5h1M291,48.5h1M292,48.5h1M293,48.5h1M294,48.5h1M295,48.5h1M296,48.5h1M297,48.5h1M298,48.5h1M299,48.5h1M300,48.5h1M301,48.5h1M302,48.5h1M303,48.5h1M304,48.5h1M305,48.5h1M306,48.5h1M307,48.5h1M308,48.5h1M309,48.5h1M310,48.5h1M311,48.5h1M312,48.5h1M313,48.5h1M314,48.5h1M315,48.5h1M316,48.5h1M317,48.5h1M318,48.5h1M319,48.5h1M320,48.5h1M321,48.5h1M322,48.5h1M323,48.5h1M324,48.5h1M325,48.5h1M326,48.5h1M327,48.5h1M328,48.5h1M329,48.5h1M330,48.5h1M331,48.5h1M332,48.5h1M333,48.5h1M334,48.5h1M335,48.5h1M336,48.5h1M337,48.5h1M338,48.5h1M339,48.5h1M340,48.5h1M341,48.5h1M342,48.5h1M343,48.5h1M344,48.5h1M345,48.5h1M346,48.5h1M347,48.5h1M348,48.5h1M349,48.5h1M350,48.5h1M351,48.5h1M352,48.5h1M353,48.5h1M354,48.5h1M355,48.5h1M356,48.5h1M357,48.5h1M358,48.5h1M359,48.5h1M360,48.5h1M361,48.5h1M362,48.5h1M363,48.5h1M364,48.5h1M365,48.5h1M366,48.5h1M367,48.5h1M368,48.5h1M369,48.5h1M370,48.5h1M371,48.5h1M372,48.5h1M373,48.5h1M374,48.5h1M375,48.5h1M376,48.5h1M377,48.5h1M378,48.5h1M379,48.5h1M380,48.5h1M381,48.5h1M382,48.5h1M383,48.5h1M384,48.5h1M385,48.5h1M386,48.5h1M387,48.5h1M388,48.5h1M389,48.5h1M390,48.5h1M391,48.5h1M392,48.5h1M393,48.5h1M394,48.5h1M395,48.5h1M396,48.5h1M397,49.5h1M398,49.5h1M399,49.5h1M400,49.5h1M401,49.5h1M402,49.5h1M403,49.5h1M404,49.5h1M405,49.5h1M406,49.5h1M407,49.5h1M408,49.5h1M409,49.5h1M410,49.5h1M411,49.5h1M412,49.5h1M413,49.5h1M414,49.5h1M415,49.5h1M416,49.5h1M417,49.5h1M418,49.5h1M419,49.5h1M420,49.5h1M421,49.5h1M422,49.5h1M423,49.5h1M424,49.5h1M425,49.5h1M426,49.5h1M427,49.5h1M428,49.5h1M429,49.5h1M430,49.5h1M431,49.5h1M432,49.5h1M433,49.5h1M434,49.5h1M435,49.5h1M436,49.5h1M437,49.5h1M438,49.5h1M439,49.5h1M440,49.5h1M441,49.5h1M442,50.5h1M443,50.5h1M444,50.5h1M445,50.5h1M446,50.5h1M447,50.5h1M448,50.5h1M449,50.5h1M450,50.5h1M451,50.5h1M452,50.5h1M453,50.5h1M454,50.5h1M455,50.5h1M456,50.5h1M457,50.5h1M458,50.5h1M459,50.5h1M460,50.5h1M461,50.5h1M462,50.5h1M463,50.5h1M464,50.5h1M465,50.5h1M466,50.5h1M467,50.5h1M468,50.5h1M469,50.5h1M470,50.5h1M471,50.5h1M472,50.5h1M473,51.5h1M474,51.5h1M475,51.5h1M476,51.5h1M477,51.5h1M478,51.5h1M479,51.5h1M480,51.5h1M481,51.5h1M482,51.5h1M483,51.5h1M484,51.5h1M485,51.5h1M486,51.5h1M487,51.5h1M488,51.5h1M489,51.5h1M490,51.5h1M491,51.5h1M492,51.5h1M493,51.5h1M494,51.5h1M495,51.5h1M496,51.5h1M497,51.5h1M498,51.5h1M499,52.5h1M500,52.5h1M501,52.5h1M502,52.5h1M503,52.5h1M504,52.5h1M505,52.5h1M506,52.5h1M507,52.5h1M508,52.5h1M509,52.5h1M510,52.5h1M511,52.5h1M512,52.5h1M513,52.5h1M514,52.5h1M515,52.5h1M516,52.5h1M517,52.5h1M518,52.5h1M519,52.5h1M520,52.5h1M521,53.5h1M522,53.5h1M523,53.5h1M524,53.5h1M525,53.5h1M526,53.5h1M527,53.5h1M528,53.5h1M529,53.5h1M530,53.5h1M531,53.5h1M532,53.5h1M533,53.5h1M534,53.5h1M535,53.5h1M536,53.5h1M537,53.5h1M538,53.5h1M539,53.5h1M540,53.5h1M541,54.5h1M542,54.5h1M543,54.5h1M544,54.5h1M545,54.5h1M546,54.5h1M547,54.5h1M548,54.5h1M549,54.5h1M550,54.5h1M551,54.5h1M552,54.5h1M553,54.5h1M554,54.5h1M555,54.5h1M556,54.5h1M557,54.5h1M558,54.5h1M559,55.5h1M560,55.5h1M561,55.5h1M562,55.5h1M563,55.5h1M564,55.5h1M565,55.5h1M566,55.5h1M567,55.5h1M568,55.5h1M569,55.5h1M570,55.5h1M571,55.5h1M572,55.5h1M573,55.5h1M574,55.5h1M575,55.5h1M576,56.5h1M577,56.5h1M578,56.5h1M579,56.5h1M580,56.5h1M581,56.5h1M582,56.5h1M583,56.5h1M584,56.5h1M585,56.5h1M586,56.5h1M587,56.5h1M588,56.5h1M589,56.5h1M590,56.5h1M591,57.5h1M592,57.5h1M593,57.5h1M594,57.5h1M595,57.5h1M596,57.5h1M597,57.5h1M598,57.5h1M599,57.5h1M600,57.5h1M601,57.5h1M602,57.5h1M603,57.5h1M604,57.5h1M605,57.5h1M606,58.5h1M607,58.5h1M608,58.5h1M609,58.5h1M610,58.5h1M611,58.5h1M612,58.5h1M613,58.5h1M614,58.5h1M615,58.5h1M616,58.5h1M617,58.5h1M618,58.5h1M619,58.5h1M620,59.5h1M621,59.5h1M622,59.5h1M623,59.5h1M624,59.5h1M625,59.5h1M626,59.5h1M627,59.5h1M628,59.5h1M629,59.5h1M630,59.5h1M631,59.5h1M632,59.5h1M633,59.5h1M634,60.5h1M635,60.5h1M636,60.5h1M637,60.5h1M638,60.5h1M639,60.5h1M640,60.5h1M641,60.5h1M642,60.5h1M643,60.5h1M644,60.5h1M645,60.5h1M646,61.5h1M647,61.5h1M648,61.5h1M649,61.5h1M650,61.5h1M651,61.5h1M652,61.5h1M653,61.5h1M654,61.5h1M655,61.5h1M656,61.5h1M657,61.5h1M658,62.5h1M659,62.5h1M660,62.5h1M661,62.5h1M662,62.5h1M663,62.5h1M664,62.5h1M665,62.5h1M666,62.5h1M667,62.5h1M668,62.5h1M669,62.5h1M670,63.5h1M671,63.5h1M672,63.5h1M673,63.5h1M674,63.5h1M675,63.5h1M676,63.5h1M677,63.5h1M678,63.5h1M679,63.5h1M680,63.5h1M681,64.5h1M682,64.5h1M683,64.5h1M684,64.5h1M685,64.5h1M686,64.5h1M687,64.5h1M688,64.5h1M689,64.5h1M690,64.5h1M691,64.5h1M692,65.5h1M693,65.5h1M694,65.5h1M695,65.5h1M696,65.5h1M697,65.5h1M698,65.5h1M699,65.5h1M700,65.5h1M701,65.5h1M702,65.5h1M703,66.5h1M704,66.5h1M705,66.5h1M706,66.5h1M707,66.5h1M708,66.5h1M709,66.5h1M710,66.5h1M711,66.5h1M712,66.5h1M713,67.5h1M714,67.5h1M715,67.5h1M716,67.5h1M717,67.5h1M718,67.5h1M719,67.5h1M720,67.5h1M721,67.5h1M722,68.5h1M723,68.5h1M724,68.5h1M725,68.5h1M726,68.5h1M727,68.5h1M728,68.5h1M729,68.5h1M730,68.5h1M731,68.5h1M732,69.5h1M733,69.5h1M734,69.5h1M735,69.5h1M736,69.5h1M737,69.5h1M738,69.5h1M739,69.5h1M740,69.5h1M741,70.5h1M742,70.5h1M743,70.5h1M744,70.5h1M745,70.5h1M746,70.5h1M747,70.5h1M748,70.5h1M749,70.5h1M750,71.5h1M751,71.5h1M752,71.5h1M753,71.5h1M754,71.5h1M755,71.5h1M756,71.5h1M757,71.5h1M758,71.5h1M759,72.5h1M760,72.5h1M761,72.5h1M762,72.5h1M763,72.5h1M764,72.5h1M765,72.5h1M766,72.5h1M767,73.5h1M768,73.5h1M769,73.5h1M770,73.5h1M771,73.5h1M772,73.5h1M773,73.5h1M774,73.5h1M775,74.5h1M776,74.5h1M777,74.5h1M778,74.5h1M779,74.5h1M780,74.5h1M781,74.5h1M782,74.5h1M783,75.5h1M784,75.5h1M785,75.5h1M786,75.5h1M787,75.5h1M788,75.5h1M789,75.5h1M790,75.5h1M791,76.5h1M792,76.5h1M793,76.5h1M794,76.5h1M795,76.5h1M796,76.5h1M797,76.5h1M798,77.5h1M799,77.5h1M800,77.5h1M801,77.5h1M802,77.5h1M803,77.5h1M804,77.5h1M805,77.5h1M806,78.5h1M807,78.5h1M808,78.5h1M809,78.5h1M810,78.5h1M811,78.5h1M812,78.5h1M813,79.5h1M814,79.5h1M815,79.5h1M816,79.5h1M817,79.5h1M818,79.5h1M819,79.5h1M820,80.5h1M821,80.5h1M822,80.5h1M823,80.5h1M824,80.5h1M825,80.5h1M826,80.5h1M827,81.5h1M828,81.5h1M829,81.5h1M830,81.5h1M831,81.5h1M832,81.5h1M833,82.5h1M834,82.5h1M835,82.5h1M836,82.5h1M837,82.5h1M838,82.5h1M839,82.5h1M840,83.5h1M841,83.5h1M842,83.5h1M843,83.5h1M844,83.5h1M845,83.5h1M846,84.5h1M847,84.5h1M848,84.5h1M849,84.5h1M850,84.5h1M851,84.5h1M852,85.5h1M853,85.5h1M854,85.5h1M855,85.5h1M856,85.5h1M857,85.5h1M858,86.5h1M859,86.5h1M860,86.5h1M861,86.5h1M862,86.5h1M863,86.5h1M864,87.5h1M865,87.5h1M866,87.5h1M867,87.5h1M868,87.5h1M869,87.5h1M870,88.5h1M871,88.5h1M872,88.5h1M873,88.5h1M874,88.5h1M875,89.5h1M876,89.5h1M877,89.5h1M878,89.5h1M879,89.5h1M880,89.5h1M881,90.5h1M882,90.5h1M883,90.5h1M884,90.5h1M885,90.5h1M886,91.5h1M887,91.5h1M888,91.5h1M889,91.5h1M890,91.5h1M891,92.5h1M892,92.5h1M893,92.5h1M894,92.5h1M895,92.5h1M896,93.5h1M897,93.5h1M898,93.5h1M899,93.5h1M900,93.5h1M901,94.5h1M902,94.5h1M903,94.5h1M904,94.5h1M905,94.5h1M906,95.5h1M907,95.5h1M908,95.5h1M909,95.5h1M910,96.5h1M911,96.5h1M912,96.5h1M913,96.5h1M914,96.5h1M915,97.5h1M916,97.5h1M917,97.5h1M918,97.5h1M919,98.5h1M920,98.5h1M921,98.5h1M922,98.5h1M923,99.5h1M924,99.5h1M925,99.5h1M926,99.5h1M927,100.5h1M928,100.5h1M929,100.5h1M930,100.5h1M931,101.5h1M932,101.5h1M933,101.5h1M934,101.5h1M935,102.5h1M936,102.5h1M937,102.5h1M938,102.5h1M939,103.5h1M940,103.5h1M941,103.5h1M942,103.5h1M943,104.5h1M944,104.5h1M945,104.5h1M946,105.5h1M947,105.5h1M948,105.5h1M949,106.5h1M950,106.5h1M951,106.5h1M952,106.5h1M953,107.5h1M954,107.5h1M955,107.5h1M956,108.5h1M957,108.5h1M958,108.5h1M959,109.5h1M960,109.5h1M961,109.5h1M962,110.5h1M963,110.5h1M964,110.5h1M965,111.5h1M966,111.5h1M967,111.5h1M968,112.5h1M969,112.5h1M970,113.5h1M971,113.5h1M972,113.5h1M973,114.5h1M974,114.5h1M975,115.5h1M976,115.5h1M977,116.5h1M978,116.5h1M979,116.5h1M980,117.5h1M981,117.5h1M982,118.5h1M983,118.5h1M984,119.5h1M985,120.5h1M986,120.5h1M987,121.5h1M988,121.5h1M989,122.5h1M990,123.5h1M991,124.5h1M992,124.5h1M993,125.5h1M994,126.5h1M995,127.5h1M996,128.5h1M997.5,128.5V130.5M997,130.5h1M998.5,130.5V134.5M998,134.5h1" fill="none" stroke="#f4fbf4" stroke-width="1"/><path d="M7,91.5h1M8.5,91.5V95.5M8,95.5h1M9.5,95.5V97.5M9,97.5h1M10,98.5h1M11,99.5h1M12,100.5h1M13,101.5h1M14,101.5h1M15,102.5h1M16,103.5h1M17,104.5h1M18,104.5h1M19,105.5h1M20,105.5h1M21,106.5h1M22,107.5h1M23,107.5h1M24,108.5h1M25,108.5h1M26,109.5h1M27,109.5h1M28,109.5h1M29,110.5h1M30,110.5h1M31,111.5h1M32,111.5h1M33,112.5h1M34,112.5h1M35,112.5h1M36,113.5h1M37,113.5h1M38,114.5h1M39,114.5h1M40,114.5h1M41,115.5h1M42,115.5h1M43,115.5h1M44,116.5h1M45,116.5h1M46,116.5h1M47,117.5h1M48,117.5h1M49,117.5h1M50,118.5h1M51,118.5h1M52,118.5h1M53,119.5h1M54,119.5h1M55,119.5h1M56,119.5h1M57,120.5h1M58,120.5h1M59,120.5h1M60,121.5h1M61,121.5h1M62,121.5h1M63,122.5h1M64,122.5h1M65,122.5h1M66,122.5h1M67,123.5h1M68,123.5h1M69,123.5h1M70,123.5h1M71,124.5h1M72,124.5h1M73,124.5h1M74,124.5h1M75,125.5h1M76,125.5h1M77,125.5h1M78,125.5h1M79,126.5h1M80,126.5h1M81,126.5h1M82,126.5h1M83,127.5h1M84,127.5h1M85,127.5h1M86,127.5h1M87,128.5h1M88,128.5h1M89,128.5h1M90,128.5h1M91,129.5h1M92,129.5h1M93,129.5h1M94,129.5h1M95,129.5h1M96,130.5h1M97,130.5h1M98,130.5h1M99,130.5h1M100,131.5h1M101,131.5h1M102,131.5h1M103,131.5h1M104,131.5h1M105,132.5h1M106,132.5h1M107,132.5h1M108,132.5h1M109,132.5h1M110,133.5h1M111,133.5h1M112,133.5h1M113,133.5h1M114,133.5h1M115,134.5h1M116,134.5h1M117,134.5h1M118,134.5h1M119,134.5h1M120,135.5h1M121,135.5h1M122,135.5h1M123,135.5h1M124,135.5h1M125,136.5h1M126,136.5h1M127,136.5h1M128,136.5h1M129,136.5h1M130,136.5h1M131,137.5h1M132,137.5h1M133,137.5h1M134,137.5h1M135,137.5h1M136,138.5h1M137,138.5h1M138,138.5h1M139,138.5h1M140,138.5h1M141,138.5h1M142,139.5h1M143,139.5h1M144,139.5h1M145,139.5h1M146,139.5h1M147,139.5h1M148,140.5h1M149,140.5h1M150,140.5h1M151,140.5h1M152,140.5h1M153,140.5h1M154,141.5h1M155,141.5h1M156,141.5h1M157,141.5h1M158,141.5h1M159,141.5h1M160,142.5h1M161,142.5h1M162,142.5h1M163,142.5h1M164,142.5h1M165,142.5h1M166,143.5h1M167,143.5h1M168,143.5h1M169,143.5h1M170,143.5h1M171,143.5h1M172,143.5h1M173,144.5h1M174,144.5h1M175,144.5h1M176,144.5h1M177,144.5h1M178,144.5h1M179,145.5h1M180,145.5h1M181,145.5h1M182,145.5h1M183,145.5h1M184,145.5h1M185,145.5h1M186,146.5h1M187,146.5h1M188,146.5h1M189,146.5h1M190,146.5h1M191,146.5h1M192,146.5h1M193,147.5h1M194,147.5h1M195,147.5h1M196,147.5h1M197,147.5h1M198,147.5h1M199,147.5h1M200,148.5h1M201,148.5h1M202,148.5h1M203,148.5h1M204,148.5h1M205,148.5h1M206,148.5h1M207,148.5h1M208,149.5h1M209,149.5h1M210,149.5h1M211,149.5h1M212,149.5h1M213,149.5h1M214,149.5h1M215,150.5h1M216,150.5h1M217,150.5h1M218,150.5h1M219,150.5h1M220,150.5h1M221,150.5h1M222,150.5h1M223,151.5h1M224,151.5h1M225,151.5h1M226,151.5h1M227,151.5h1M228,151.5h1M229,151.5h1M230,151.5h1M231,152.5h1M232,152.5h1M233,152.5h1M234,152.5h1M235,152.5h1M236,152.5h1M237,152.5h1M238,152.5h1M239,153.5h1M240,153.5h1M241,153.5h1M242,153.5h1M243,153.5h1M244,153.5h1M245,153.5h1M246,153.5h1M247,154.5h1M248,154.5h1M249,154.5h1M250,154.5h1M251,154.5h1M252,154.5h1M253,154.5h1M254,154.5h1M255,154.5h1M256,155.5h1M257,155.5h1M258,155.5h1M259,155.5h1M260,155.5h1M261,155.5h1M262,155.5h1M263,155.5h1M264,155.5h1M265,156.5h1M266,156.5h1M267,156.5h1M268,156.5h1M269,156.5h1M270,156.5h1M271,156.5h1M272,156.5h1M273,156.5h1M274,157.5h1M275,157.5h1M276,157.5h1M277,157.5h1M278,157.5h1M279,157.5h1M280,157.5h1M281,157.5h1M282,157.5h1M283,157.5h1M284,158.5h1M285,158.5h1M286,158.5h1M287,158.5h1M288,158.5h1M289,158.5h1M290,158.5h1M291,158.5h1M292,158.5h1M293,159.5h1M294,159.5h1M295,159.5h1M296,159.5h1M297,159.5h1M298,159.5h1M299,159.5h1M300,159.5h1M301,159.5h1M302,159.5h1M303,160.5h1M304,160.5h1M305,160.5h1M306,160.5h1M307,160.5h1M308,160.5h1M309,160.5h1M310,160.5h1M311,160.5h1M312,160.5h1M313,160.5h1M314,161.5h1M315,161.5h1M316,161.5h1M317,161.5h1M318,161.5h1M319,161.5h1M320,161.5h1M321,161.5h1M322,161.5h1M323,161.5h1M324,161.5h1M325,162.5h1M326,162.5h1M327,162.5h1M328,162.5h1M329,162.5h1M330,162.5h1M331,162.5h1M332,162.5h1M333,162.5h1M334,162.5h1M335,162.5h1M336,163.5h1M337,163.5h1M338,163.5h1M339,163.5h1M340,163.5h1M341,163.5h1M342,163.5h1M343,163.5h1M344,163.5h1M345,163.5h1M346,163.5h1M347,163.5h1M348,164.5h1M349,164.5h1M350,164.5h1M351,164.5h1M352,164.5h1M353,164.5h1M354,164.5h1M355,164.5h1M356,164.5h1M357,164.5h1M358,164.5h1M359,164.5h1M360,165.5h1M361,165.5h1M362,165.5h1M363,165.5h1M364,165.5h1M365,165.5h1M366,165.5h1M367,165.5h1M368,165.5h1M369,165.5h1M370,165.5h1M371,165.5h1M372,166.5h1M373,166.5h1M374,166.5h1M375,166.5h1M376,166.5h1M377,166.5h1M378,166.5h1M379,166.5h1M380,166.5h1M381,166.5h1M382,166.5h1M383,166.5h1M384,166.5h1M385,166.5h1M386,167.5h1M387,167.5h1M388,167.5h1M389,167.5h1M390,167.5h1M391,167.5h1M392,167.5h1M393,167.5h1M394,167.5h1M395,167.5h1M396,167.5h1M397,167.5h1M398,167.5h1M399,167.5h1M400,168.5h1M401,168.5h1M402,168.5h1M403,168.5h1M404,168.5h1M405,168.5h1M406,168.5h1M407,168.5h1M408,168.5h1M409,168.5h1M410,168.5h1M411,168.5h1M412,168.5h1M413,168.5h1M414,168.5h1M415,169.5h1M416,169.5h1M417,169.5h1M418,169.5h1M419,169.5h1M420,169.5h1M421,169.5h1M422,169.5h1M423,169.5h1M424,169.5h1M425,169.5h1M426,169.5h1M427,169.5h1M428,169.5h1M429,169.5h1M430,170.5h1M431,170.5h1M432,170.5h1M433,170.5h1M434,170.5h1M435,170.5h1M436,170.5h1M437,170.5h1M438,170.5h1M439,170.5h1M440,170.5h1M441,170.5h1M442,170.5h1M443,170.5h1M444,170.5h1M445,170.5h1M446,170.5h1M447,171.5h1M448,171.5h1M449,171.5h1M450,171.5h1M451,171.5h1M452,171.5h1M453,171.5h1M454,171.5h1M455,171.5h1M456,171.5h1M457,171.5h1M458,171.5h1M459,171.5h1M460,171.5h1M461,171.5h1M462,171.5h1M463,171.5h1M464,171.5h1M465,172.5h1M466,172.5h1M467,172.5h1M468,172.5h1M469,172.5h1M470,172.5h1M471,172.5h1M472,172.5h1M473,172.5h1M474,172.5h1M475,172.5h1M476,172.5h1M477,172.5h1M478,172.5h1M479,172.5h1M480,172.5h1M481,172.5h1M482,172.5h1M483,172.5h1M484,172.5h1M485,173.5h1M486,173.5h1M487,173.5h1M488,173.5h1M489,173.5h1M490,173.5h1M491,173.5h1M492,173.5h1M493,173.5h1M494,173.5h1M495,173.5h1M496,173.5h1M497,173.5h1M498,173.5h1M499,173.5h1M500,173.5h1M501,173.5h1M502,173.5h1M503,173.5h1M504,173.5h1M505,173.5h1M506,173.5h1M507,174.5h1M508,174.5h1M509,174.5h1M510,174.5h1M511,174.5h1M512,174.5h1M513,174.5h1M514,174.5h1M515,174.5h1M516,174.5h1M517,174.5h1M518,174.5h1M519,174.5h1M520,174.5h1M521,174.5h1M522,174.5h1M523,174.5h1M524,174.5h1M525,174.5h1M526,174.5h1M527,174.5h1M528,174.5h1M529,174.5h1M530,174.5h1M531,174.5h1M532,174.5h1M533,175.5h1M534,175.5h1M535,175.5h1M536,175.5h1M537,175.5h1M538,175.5h1M539,175.5h1M540,175.5h1M541,175.5h1M542,175.5h1M543,175.5h1M544,175.5h1M545,175.5h1M546,175.5h1M547,175.5h1M548,175.5h1M549,175.5h1M550,175.5h1M551,175.5h1M552,175.5h1M553,175.5h1M554,175.5h1M555,175.5h1M556,175.5h1M557,175.5h1M558,175.5h1M559,175.5h1M560,175.5h1M561,175.5h1M562,175.5h1M563,175.5h1M564,176.5h1M565,176.5h1M566,176.5h1M567,176.5h1M568,176.5h1M569,176.5h1M570,176.5h1M571,176.5h1M572,176.5h1M573,176.5h1M574,176.5h1M575,176.5h1M576,176.5h1M577,176.5h1M578,176.5h1M579,176.5h1M580,176.5h1M581,176.5h1M582,176.5h1M583,176.5h1M584,176.5h1M585,176.5h1M586,176.5h1M587,176.5h1M588,176.5h1M589,176.5h1M590,176.5h1M591,176.5h1M592,176.5h1M593,176.5h1M594,176.5h1M595,176.5h1M596,176.5h1M597,176.5h1M598,176.5h1M599,176.5h1M600,176.5h1M601,176.5h1M602,176.5h1M603,176.5h1M604,176.5h1M605,176.5h1M606,176.5h1M607,176.5h1M608,176.5h1M609,177.5h1M610,177.5h1M611,177.5h1M612,177.5h1M613,177.5h1M614,177.5h1M615,177.5h1M616,177.5h1M617,177.5h1M618,177.5h1M619,177.5h1M620,177.5h1M621,177.5h1M622,177.5h1M623,177.5h1M624,177.5h1M625,177.5h1M626,177.5h1M627,177.5h1M628,177.5h1M629,177.5h1M630,177.5h1M631,177.5h1M632,177.5h1M633,177.5h1M634,177.5h1M635,177.5h1M636,177.5h1M637,177.5h1M638,177.5h1M639,177.5h1M640,177.5h1M641,177.5h1M642,177.5h1M643,177.5h1M644,177.5h1M645,177.5h1M646,177.5h1M647,177.5h1M648,177.5h1M649,177.5h1M650,177.5h1M651,177.5h1M652,177.5h1M653,177.5h1M654,177.5h1M655,177.5h1M656,177.5h1M657,177.5h1M658,177.5h1M659,177.5h1M660,177.5h1M661,177.5h1M662,177.5h1M663,177.5h1M664,177.5h1M665,177.5h1M666,177.5h1M667,177.5h1M668,177.5h1M669,177.5h1M670,177.5h1M671,177.5h1M672,177.5h1M673,177.5h1M674,177.5h1M675,177.5h1M676,177.5h1M677,177.5h1M678,177.5h1M679,177.5h1M680,177.5h1M681,177.5h1M682,177.5h1M683,177.5h1M684,177.5h1M685,177.5h1M686,177.5h1M687,177.5h1M688,177.5h1M689,177.5h1M690,177.5h1M691,177.5h1M692,177.5h1M693,177.5h1M694,177.5h1M695,177.5h1M696,177.5h1M697,177.5h1M698,177.5h1M699,177.5h1M700,177.5h1M701,177.5h1M702,177.5h1M703,177.5h1M704,177.5h1M705,177.5h1M706,177.5h1M707,177.5h1M708,177.5h1M709,177.5h1M710,177.5h1M711,177.5h1M712,177.5h1M713,177.5h1M714,177.5h1M715,177.5h1M716,177.5h1M717,177.5h1M718,177.5h1M719,177.5h1M720,177.5h1M721,177.5h1M722,177.5h1M723,177.5h1M724,177.5h1M725,176.5h1M726,176.5h1M727,176.5h1M728,176.5h1M729,176.5h1M730,176.5h1M731,176.5h1M732,176.5h1M733,176.5h1M734,176.5h1M735,176.5h1M736,176.5h1M737,176.5h1M738,176.5h1M739,176.5h1M740,176.5h1M741,176.5h1M742,176.5h1M743,176.5h1M744,176.5h1M745,176.5h1M746,176.5h1M747,176.5h1M748,176.5h1M749,176.5h1M750,176.5h1M751,176.5h1M752,176.5h1M753,176.5h1M754,176.5h1M755,176.5h1M756,176.5h1M757,176.5h1M758,176.5h1M759,176.5h1M760,176.5h1M761,176.5h1M762,176.5h1M763,176.5h1M764,175.5h1M765,175.5h1M766,175.5h1M767,175.5h1M768,175.5h1M769,175.5h1M770,175.5h1M771,175.5h1M772,175.5h1M773,175.5h1M774,175.5h1M775,175.5h1M776,175.5h1M777,175.5h1M778,175.5h1M779,175.5h1M780,175.5h1M781,175.5h1M782,175.5h1M783,175.5h1M784,175.5h1M785,175.5h1M786,175.5h1M787,175.5h1M788,175.5h1M789,175.5h1M790,175.5h1M791,174.5h1M792,174.5h1M793,174.5h1M794,174.5h1M795,174.5h1M796,174.5h1M797,174.5h1M798,174.5h1M799,174.5h1M800,174.5h1M801,174.5h1M802,174.5h1M803,174.5h1M804,174.5h1M805,174.5h1M806,174.5h1M807,174.5h1M808,174.5h1M809,174.5h1M810,174.5h1M811,173.5h1M812,173.5h1M813,173.5h1M814,173.5h1M815,173.5h1M816,173.5h1M817,173.5h1M818,173.5h1M819,173.5h1M820,173.5h1M821,173.5h1M822,173.5h1M823,173.5h1M824,173.5h1M825,173.5h1M826,173.5h1M827,173.5h1M828,172.5h1M829,172.5h1M830,172.5h1M831,172.5h1M832,172.5h1M833,172.5h1M834,172.5h1M835,172.5h1M836,172.5h1M837,172.5h1M838,172.5h1M839,172.5h1M840,172.5h1M841,172.5h1M842,172.5h1M843,171.5h1M844,171.5h1M845,171.5h1M846,171.5h1M847,171.5h1M848,171.5h1M849,171.5h1M850,171.5h1M851,171.5h1M852,171.5h1M853,171.5h1M854,171.5h1M855,171.5h1M856,170.5h1M857,170.5h1M858,170.5h1M859,170.5h1M860,170.5h1M861,170.5h1M862,170.5h1M863,170.5h1M864,170.5h1M865,170.5h1M866,170.5h1M867,170.5h1M868,169.5h1M869,169.5h1M870,169.5h1M871,169.5h1M872,169.5h1M873,169.5h1M874,169.5h1M875,169.5h1M876,169.5h1M877,169.5h1M878,168.5h1M879,168.5h1M880,168.5h1M881,168.5h1M882,168.5h1M883,168.5h1M884,168.5h1M885,168.5h1M886,168.5h1M887,168.5h1M888,167.5h1M889,167.5h1M890,167.5h1M891,167.5h1M892,167.5h1M893,167.5h1M894,167.5h1M895,167.5h1M896,167.5h1M897,166.5h1M898,166.5h1M899,166.5h1M900,166.5h1M901,166.5h1M902,166.5h1M903,166.5h1M904,166.5h1M905,165.5h1M906,165.5h1M907,165.5h1M908,165.5h1M909,165.5h1M910,165.5h1M911,165.5h1M912,165.5h1M913,164.5h1M914,164.5h1M915,164.5h1M916,164.5h1M917,164.5h1M918,164.5h1M919,164.5h1M920,163.5h1M921,163.5h1M922,163.5h1M923,163.5h1M924,163.5h1M925,163.5h1M926,162.5h1M927,162.5h1M928,162.5h1M929,162.5h1M930,162.5h1M931,162.5h1M932,161.5h1M933,161.5h1M934,161.5h1M935,161.5h1M936,161.5h1M937,161.5h1M938,160.5h1M939,160.5h1M940,160.5h1M941,160.5h1M942,160.5h1M943,159.5h1M944,159.5h1M945,159.5h1M946,159.5h1M947,159.5h1M948,158.5h1M949,158.5h1M950,158.5h1M951,158.5h1M952,158.5h1M953,157.5h1M954,157.5h1M955,157.5h1M956,157.5h1M957,156.5h1M958,156.5h1M959,156.5h1M960,156.5h1M961,155.5h1M962,155.5h1M963,155.5h1M964,155.5h1M965,154.5h1M966,154.5h1M967,154.5h1M968,154.5h1M969,153.5h1M970,153.5h1M971,153.5h1M972,152.5h1M973,152.5h1M974,152.5h1M975,151.5h1M976,151.5h1M977,151.5h1M978,150.5h1M979,150.5h1M980,149.5h1M981,149.5h1M982,149.5h1M983,148.5h1M984,148.5h1M985,147.5h1M986,147.5h1M987,146.5h1M988,146.5h1M989,145.5h1M990,145.5h1M991,144.5h1M992,143.5h1M993,142.5h1M994,142.5h1M995,141.5h1M996.5,139.5V141.5M996,139.5h1M997,138.5h1M998.5,134.5V138.5M998,134.5h1" fill="none" stroke="#f4fbf4" stroke-width="1"/><path d="M7,91.5h1M8.5,86.5V91.5M8,86.5h1M9.5,84.5V86.5M9,84.5h1M10,83.5h1M11,82.5h1M12,81.5h1M13,80.5h1M14,79.5h1M15,78.5h1M16,77.5h1M17,77.5h1M18,76.5h1M19,75.5h1M20,75.5h1M21,74.5h1M22,73.5h1M23,73.5h1M24,72.5h1M25,72.5h1M26,71.5h1M27,71.5h1M28,70.5h1M29,70.5h1M30,70.5h1M31,69.5h1M32,69.5h1M33,68.5h1M34,68.5h1M35,68.5h1M36,67.5h1M37,67.5h1M38,66.5h1M39,66.5h1M40,66.5h1M41,65.5h1M42,65.5h1M43,65.5h1M44,64.5h1M45,64.5h1M46,64.5h1M47,63.5h1M48,63.5h1M49,63.5h1M50,63.5h1M51,62.5h1M52,62.5h1M53,62.5h1M54,61.5h1M55,61.5h1M56,61.5h1M57,61.5h1M58,60.5h1M59,60.5h1M60,60.5h1M61,60.5h1M62,59.5h1M63,59.5h1M64,59.5h1M65,59.5h1M66,58.5h1M67,58.5h1M68,58.5h1M69,58.5h1M70,57.5h1M71,57.5h1M72,57.5h1M73,57.5h1M74,57.5h1M75,56.5h1M76,56.5h1M77,56.5h1M78,56.5h1M79,55.5h1M80,55.5h1M81,55.5h1M82,55.5h1M83,55.5h1M84,54.5h1M85,54.5h1M86,54.5h1M87,54.5h1M88,54.5h1M89,54.5h1M90,53.5h1M91,53.5h1M92,53.5h1M93,53.5h1M94,53.5h1M95,52.5h1M96,52.5h1M97,52.5h1M98,52.5h1M99,52.5h1M100,52.5h1M101,51.5h1M102,51.5h1M103,51.5h1M104,51.5h1M105,51.5h1M106,51.5h1M107,50.5h1M108,50.5h1M109,50.5h1M110,50.5h1M111,50.5h1M112,50.5h1M113,50.5h1M114,49.5h1M115,49.5h1M116,49.5h1M117,49.5h1M118,49.5h1M119,49.5h1M120,49.5h1M121,48.5h1M122,48.5h1M123,48.5h1M124,48.5h1M125,48.5h1M126,48.5h1M127,48.5h1M128,47.5h1M129,47.5h1M130,47.5h1M131,47.5h1M132,47.5h1M133,47.5h1M134,47.5h1M135,47.5h1M136,46.5h1M137,46.5h1M138,46.5h1M139,46.5h1M140,46.5h1M141,46.5h1M142,46.5h1M143,46.5h1M144,46.5h1M145,45.5h1M146,45.5h1M147,45.5h1M148,45.5h1M149,45.5h1M150,45.5h1M151,45.5h1M152,45.5h1M153,45.5h1M154,44.5h1M155,44.5h1M156,44.5h1M157,44.5h1M158,44.5h1M159,44.5h1M160,44.5h1M161,44.5h1M162,44.5h1M163,44.5h1M164,43.5h1M165,43.5h1M166,43.5h1M167,43.5h1M168,43.5h1M169,43.5h1M170,43.5h1M171,43.5h1M172,43.5h1M173,43.5h1M174,42.5h1M175,42.5h1M176,42.5h1M177,42.5h1M178,42.5h1M179,42.5h1M180,42.5h1M181,42.5h1M182,42.5h1M183,42.5h1M184,42.5h1M185,42.5h1M186,41.5h1M187,41.5h1M188,41.5h1M189,41.5h1M190,41.5h1M191,41.5h1M192,41.5h1M193,41.5h1M194,41.5h1M195,41.5h1M196,41.5h1M197,41.5h1M198,41.5h1M199,40.5h1M200,40.5h1M201,40.5h1M202,40.5h1M203,40.5h1M204,40.5h1M205,40.5h1M206,40.5h1M207,40.5h1M208,40.5h1M209,40.5h1M210,40.5h1M211,40.5h1M212,40.5h1M213,39.5h1M214,39.5h1M215,39.5h1M216,39.5h1M217,39.5h1M218,39.5h1M219,39.5h1M220,39.5h1M221,39.5h1M222,39.5h1M223,39.5h1M224,39.5h1M225,39.5h1M226,39.5h1M227,39.5h1M228,39.5h1M229,39.5h1M230,38.5h1M231,38.5h1M232,38.5h1M233,38.5h1M234,38.5h1M235,38.5h1M236,38.5h1M237,38.5h1M238,38.5h1M239,38.5h1M240,38.5h1M241,38.5h1M242,38.5h1M243,38.5h1M244,38.5h1M245,38.5h1M246,38.5h1M247,38.5h1M248,38.5h1M249,38.5h1M250,37.5h1M251,37.5h1M252,37.5h1M253,37.5h1M254,37.5h1M255,37.5h1M256,37.5h1M257,37.5h1M258,37.5h1M259,37.5h1M260,37.5h1M261,37.5h1M262,37.5h1M263,37.5h1M264,37.5h1M265,37.5h1M266,37.5h1M267,37.5h1M268,37.5h1M269,37.5h1M270,37.5h1M271,37.5h1M272,37.5h1M273,37.5h1M274,36.5h1M275,36.5h1M276,36.5h1M277,36.5h1M278,36.5h1M279,36.5h1M280,36.5h1M281,36.5h1M282,36.5h1M283,36.5h1M284,36.5h1M285,36.5h1M286,36.5h1M287,36.5h1M288,36.5h1M289,36.5h1M290,36.5h1M291,36.5h1M292,36.5h1M293,36.5h1M294,36.5h1M295,36.5h1M296,36.5h1M297,36.5h1M298,36.5h1M299,36.5h1M300,36.5h1M301,36.5h1M302,36.5h1M303,36.5h1M304,36.5h1M305,36.5h1M306,36.5h1M307,36.5h1M308,36.5h1M309,36.5h1M310,36.5h1M311,35.5h1M312,35.5h1M313,35.5h1M314,35.5h1M315,35.5h1M316,35.5h1M317,35.5h1M318,35.5h1M319,35.5h1M320,35.5h1M321,35.5h1M322,35.5h1M323,35.5h1M324,35.5h1M325,35.5h1M326,35.5h1M327,35.5h1M328,35.5h1M329,35.5h1M330,35.5h1M331,35.5h1M332,35.5h1M333,35.5h1M334,35.5h1M335,35.5h1M336,35.5h1M337,35.5h1M338,35.5h1M339,35.5h1M340,35.5h1M341,35.5h1M342,35.5h1M343,35.5h1M344,35.5h1M345,35.5h1M346,35.5h1M347,35.5h1M348,35.5h1M349,35.5h1M350,35.5h1M351,35.5h1M352,35.5h1M353,35.5h1M354,35.5h1M355,35.5h1M356,35.5h1M357,35.5h1M358,35.5h1M359,35.5h1M360,35.5h1M361,35.5h1M362,35.5h1M363,35.5h1M364,35.5h1M365,35.5h1M366,35.5h1M367,35.5h1M368,35.5h1M369,35.5h1M370,35.5h1M371,35.5h1M372,35.5h1M373,35.5h1M374,35.5h1M375,35.5h1M376,35.5h1M377,35.5h1M378,35.5h1M379,35.5h1M380,35.5h1M381,35.5h1M382,35.5h1M383,35.5h1M384,35.5h1M385,35.5h1M386,35.5h1M387,35.5h1M388,35.5h1M389,35.5h1M390,35.5h1M391,35.5h1M392,35.5h1M393,35.5h1M394,35.5h1M395,35.5h1M396,35.5h1M397,35.5h1M398,35.5h1M399,35.5h1M400,35.5h1M401,35.5h1M402,35.5h1M403,35.5h1M404,35.5h1M405,35.5h1M406,35.5h1M407,35.5h1M408,35.5h1M409,35.5h1M410,35.5h1M411,35.5h1M412,35.5h1M413,35.5h1M414,35.5h1M415,35.5h1M416,35.5h1M417,35.5h1M418,35.5h1M419,35.5h1M420,35.5h1M421,35.5h1M422,36.5h1M423,36.5h1M424,36.5h1M425,36.5h1M426,36.5h1M427,36.5h1M428,36.5h1M429,36.5h1M430,36.5h1M431,36.5h1M432,36.5h1M433,36.5h1M434,36.5h1M435,36.5h1M436,36.5h1M437,36.5h1M438,36.5h1M439,36.5h1M440,36.5h1M441,36.5h1M442,36.5h1M443,36.5h1M444,36.5h1M445,36.5h1M446,36.5h1M447,36.5h1M448,36.5h1M449,36.5h1M450,36.5h1M451,36.5h1M452,36.5h1M453,36.5h1M454,36.5h1M455,36.5h1M456,36.5h1M457,36.5h1M458,36.5h1M459,36.5h1M460,36.5h1M461,36.5h1M462,37.5h1M463,37.5h1M464,37.5h1M465,37.5h1M466,37.5h1M467,37.5h1M468,37.5h1M469,37.5h1M470,37.5h1M471,37.5h1M472,37.5h1M473,37.5h1M474,37.5h1M475,37.5h1M476,37.5h1M477,37.5h1M478,37.5h1M479,37.5h1M480,37.5h1M481,37.5h1M482,37.5h1M483,37.5h1M484,37.5h1M485,37.5h1M486,37.5h1M487,37.5h1M488,37.5h1M489,37.5h1M490,38.5h1M491,38.5h1M492,38.5h1M493,38.5h1M494,38.5h1M495,38.5h1M496,38.5h1M497,38.5h1M498,38.5h1M499,38.5h1M500,38.5h1M501,38.5h1M502,38.5h1M503,38.5h1M504,38.5h1M505,38.5h1M506,38.5h1M507,38.5h1M508,38.5h1M509,38.5h1M510,38.5h1M511,38.5h1M512,38.5h1M513,38.5h1M514,39.5h1M515,39.5h1M516,39.5h1M517,39.5h1M518,39.5h1M519,39.5h1M520,39.5h1M521,39.5h1M522,39.5h1M523,39.5h1M524,39.5h1M525,39.5h1M526,39.5h1M527,39.5h1M528,39.5h1M529,39.5h1M530,39.5h1M531,39.5h1M532,39.5h1M533,39.5h1M534,40.5h1M535,40.5h1M536,40.5h1M537,40.5h1M538,40.5h1M539,40.5h1M540,40.5h1M541,40.5h1M542,40.5h1M543,40.5h1M544,40.5h1M545,40.5h1M546,40.5h1M547,40.5h1M548,40.5h1M549,40.5h1M550,40.5h1M551,40.5h1M552,41.5h1M553,41.5h1M554,41.5h1M555,41.5h1M556,41.5h1M557,41.5h1M558,41.5h1M559,41.5h1M560,41.5h1M561,41.5h1M562,41.5h1M563,41.5h1M564,41.5h1M565,41.5h1M566,41.5h1M567,41.5h1M568,42.5h1M569,42.5h1M570,42.5h1M571,42.5h1M572,42.5h1M573,42.5h1M574,42.5h1M575,42.5h1M576,42.5h1M577,42.5h1M578,42.5h1M579,42.5h1M580,42.5h1M581,42.5h1M582,42.5h1M583,43.5h1M584,43.5h1M585,43.5h1M586,43.5h1M587,43.5h1M588,43.5h1M589,43.5h1M590,43.5h1M591,43.5h1M592,43.5h1M593,43.5h1M594,43.5h1M595,43.5h1M596,43.5h1M597,43.5h1M598,44.5h1M599,44.5h1M600,44.5h1M601,44.5h1M602,44.5h1M603,44.5h1M604,44.5h1M605,44.5h1M606,44.5h1M607,44.5h1M608,44.5h1M609,44.5h1M610,44.5h1M611,45.5h1M612,45.5h1M613,45.5h1M614,45.5h1M615,45.5h1M616,45.5h1M617,45.5h1M618,45.5h1M619,45.5h1M620,45.5h1M621,45.5h1M622,45.5h1M623,45.5h1M624,46.5h1M625,46.5h1M626,46.5h1M627,46.5h1M628,46.5h1M629,46.5h1M630,46.5h1M631,46.5h1M632,46.5h1M633,46.5h1M634,46.5h1M635,46.5h1M636,47.5h1M637,47.5h1M638,47.5h1M639,47.5h1M640,47.5h1M641,47.5h1M642,47.5h1M643,47.5h1M644,47.5h1M645,47.5h1M646,47.5h1M647,48.5h1M648,48.5h1M649,48.5h1M650,48.5h1M651,48.5h1M652,48.5h1M653,48.5h1M654,48.5h1M655,48.5h1M656,48.5h1M657,48.5h1M658,49.5h1M659,49.5h1M660,49.5h1M661,49.5h1M662,49.5h1M663,49.5h1M664,49.5h1M665,49.5h1M666,49.5h1M667,49.5h1M668,49.5h1M669,50.5h1M670,50.5h1M671,50.5h1M672,50.5h1M673,50.5h1M674,50.5h1M675,50.5h1M676,50.5h1M677,50.5h1M678,50.5h1M679,51.5h1M680,51.5h1M681,51.5h1M682,51.5h1M683,51.5h1M684,51.5h1M685,51.5h1M686,51.5h1M687,51.5h1M688,51.5h1M689,52.5h1M690,52.5h1M691,52.5h1M692,52.5h1M693,52.5h1M694,52.5h1M695,52.5h1M696,52.5h1M697,52.5h1M698,53.5h1M699,53.5h1M700,53.5h1M701,53.5h1M702,53.5h1M703,53.5h1M704,53.5h1M705,53.5h1M706,53.5h1M707,54.5h1M708,54.5h1M709,54.5h1M710,54.5h1M711,54.5h1M712,54.5h1M713,54.5h1M714,54.5h1M715,54.5h1M716,55.5h1M717,55.5h1M718,55.5h1M719,55.5h1M720,55.5h1M721,55.5h1M722,55.5h1M723,55.5h1M724,55.5h1M725,56.5h1M726,56.5h1M727,56.5h1M728,56.5h1M729,56.5h1M730,56.5h1M731,56.5h1M732,56.5h1M733,57.5h1M734,57.5h1M735,57.5h1M736,57.5h1M737,57.5h1M738,57.5h1M739,57.5h1M740,57.5h1M741,58.5h1M742,58.5h1M743,58.5h1M744,58.5h1M745,58.5h1M746,58.5h1M747,58.5h1M748,58.5h1M749,59.5h1M750,59.5h1M751,59.5h1M752,59.5h1M753,59.5h1M754,59.5h1M755,59.5h1M756,60.5h1M757,60.5h1M758,60.5h1M759,60.5h1M760,60.5h1M761,60.5h1M762,60.5h1M763,60.5h1M764,61.5h1M765,61.5h1M766,61.5h1M767,61.5h1M768,61.5h1M769,61.5h1M770,61.5h1M771,62.5h1M772,62.5h1M773,62.5h1M774,62.5h1M775,62.5h1M776,62.5h1M777,62.5h1M778,63.5h1M779,63.5h1M780,63.5h1M781,63.5h1M782,63.5h1M783,63.5h1M784,63.5h1M785,64.5h1M786,64.5h1M787,64.5h1M788,64.5h1M789,64.5h1M790,64.5h1M791,64.5h1M792,65.5h1M793,65.5h1M794,65.5h1M795,65.5h1M796,65.5h1M797,65.5h1M798,66.5h1M799,66.5h1M800,66.5h1M801,66.5h1M802,66.5h1M803,66.5h1M804,66.5h1M805,67.5h1M806,67.5h1M807,67.5h1M808,67.5h1M809,67.5h1M810,67.5h1M811,68.5h1M812,68.5h1M813,68.5h1M814,68.5h1M815,68.5h1M816,68.5h1M817,69.5h1M818,69.5h1M819,69.5h1M820,69.5h1M821,69.5h1M822,69.5h1M823,70.5h1M824,70.5h1M825,70.5h1M826,70.5h1M827,70.5h1M828,70.5h1M829,71.5h1M830,71.5h1M831,71.5h1M832,71.5h1M833,71.5h1M834,72.5h1M835,72.5h1M836,72.5h1M837,72.5h1M838,72.5h1M839,72.5h1M840,73.5h1M841,73.5h1M842,73.5h1M843,73.5h1M844,73.5h1M845,74.5h1M846,74.5h1M847,74.5h1M848,74.5h1M849,74.5h1M850,74.5h1M851,75.5h1M852,75.5h1M853,75.5h1M854,75.5h1M855,75.5h1M856,76.5h1M857,76.5h1M858,76.5h1M859,76.5h1M860,76.5h1M861,77.5h1M862,77.5h1M863,77.5h1M864,77.5h1M865,77.5h1M866,78.5h1M867,78.5h1M868,78.5h1M869,78.5h1M870,78.5h1M871,79.5h1M872,79.5h1M873,79.5h1M874,79.5h1M875,80.5h1M876,80.5h1M877,80.5h1M878,80.5h1M879,80.5h1M880,81.5h1M881,81.5h1M882,81.5h1M883,81.5h1M884,82.5h1M885,82.5h1M886,82.5h1M887,82.5h1M888,82.5h1M889,83.5h1M890,83.5h1M891,83.5h1M892,83.5h1M893,84.5h1M894,84.5h1M895,84.5h1M896,84.5h1M897,85.5h1M898,85.5h1M899,85.5h1M900,85.5h1M901,86.5h1M902,86.5h1M903,86.5h1M904,86.5h1M905,87.5h1M906,87.5h1M907,87.5h1M908,87.5h1M909,88.5h1M910,88.5h1M911,88.5h1M912,88.5h1M913,89.5h1M914,89.5h1M915,89.5h1M916,89.5h1M917,90.5h1M918,90.5h1M919,90.5h1M920,91.5h1M921,91.5h1M922,91.5h1M923,91.5h1M924,92.5h1M925,92.5h1M926,92.5h1M927,93.5h1M928,93.5h1M929,93.5h1M930,93.5h1M931,94.5h1M932,94.5h1M933,94.5h1M934,95.5h1M935,95.5h1M936,95.5h1M937,96.5h1M938,96.5h1M939,96.5h1M940,97.5h1M941,97.5h1M942,97.5h1M943,98.5h1M944,98.5h1M945,98.5h1M946,99.5h1M947,99.5h1M948,99.5h1M949,100.5h1M950,100.5h1M951,100.5h1M952,101.5h1M953,101.5h1M954,101.5h1M955,102.5h1M956,102.5h1M957,103.5h1M958,103.5h1M959,103.5h1M960,104.5h1M961,104.5h1M962,105.5h1M963,105.5h1M964,105.5h1M965,106.5h1M966,106.5h1M967,107.5h1M968,107.5h1M969,108.5h1M970,108.5h1M971,109.5h1M972,109.5h1M973,110.5h1M974,110.5h1M975,111.5h1M976,111.5h1M977,112.5h1M978,112.5h1M979,113.5h1M980,113.5h1M981,114.5h1M982,115.5h1M983,115.5h1M984,116.5h1M985,116.5h1M986,117.5h1M987,118.5h1M988,119.5h1M989,119.5h1M990,120.5h1M991,121.5h1M992,122.5h1M993,123.5h1M994,124.5h1M995.5,124.5V126.5M995,126.5h1M996,127.5h1M997.5,127.5V129.5M997,129.5h1M998.5,129.5V134.5M998,134.5h1" fill="none" stroke="#f4fbf4" stroke-width="1"/><path d="M7,91.5h1M8.5,91.5V96.5M8,96.5h1M9.5,96.5V98.5M9,98.5h1M10,99.5h1M11.5,99.5V101.5M11,101.5h1M12,102.5h1M13,103.5h1M14,104.5h1M15,105.5h1M16,106.5h1M17,106.5h1M18,107.5h1M19,108.5h1M20,109.5h1M21,109.5h1M22,110.5h1M23,110.5h1M24,111.5h1M25,112.5h1M26,112.5h1M27,113.5h1M28,113.5h1M29,114.5h1M30,114.5h1M31,115.5h1M32,115.5h1M33,116.5h1M34,116.5h1M35,117.5h1M36,117.5h1M37,118.5h1M38,118.5h1M39,119.5h1M40,119.5h1M41,120.5h1M42,120.5h1M43,120.5h1M44,121.5h1M45,121.5h1M46,122.5h1M47,122.5h1M48,122.5h1M49,123.5h1M50,123.5h1M51,124.5h1M52,124.5h1M53,124.5h1M54,125.5h1M55,125.5h1M56,125.5h1M57,126.5h1M58,126.5h1M59,126.5h1M60,127.5h1M61,127.5h1M62,127.5h1M63,128.5h1M64,128.5h1M65,128.5h1M66,129.5h1M67,129.5h1M68,129.5h1M69,130.5h1M70,130.5h1M71,130.5h1M72,131.5h1M73,131.5h1M74,131.5h1M75,132.5h1M76,132.5h1M77,132.5h1M78,132.5h1M79,133.5h1M80,133.5h1M81,133.5h1M82,134.5h1M83,134.5h1M84,134.5h1M85,134.5h1M86,135.5h1M87,135.5h1M88,135.5h1M89,136.5h1M90,136.5h1M91,136.5h1M92,136.5h1M93,137.5h1M94,137.5h1M95,137.5h1M96,137.5h1M97,138.5h1M98,138.5h1M99,138.5h1M100,138.5h1M101,139.5h1M102,139.5h1M103,139.5h1M104,139.5h1M105,140.5h1M106,140.5h1M107,140.5h1M108,140.5h1M109,141.5h1M110,141.5h1M111,141.5h1M112,141.5h1M113,142.5h1M114,142.5h1M115,142.5h1M116,142.5h1M117,143.5h1M118,143.5h1M119,143.5h1M120,143.5h1M121,143.5h1M122,144.5h1M123,144.5h1M124,144.5h1M125,144.5h1M126,145.5h1M127,145.5h1M128,145.5h1M129,145.5h1M130,145.5h1M131,146.5h1M132,146.5h1M133,146.5h1M134,146.5h1M135,147.5h1M136,147.5h1M137,147.5h1M138,147.5h1M139,147.5h1M140,148.5h1M141,148.5h1M142,148.5h1M143,148.5h1M144,148.5h1M145,149.5h1M146,149.5h1M147,149.5h1M148,149.5h1M149,149.5h1M150,150.5h1M151,150.5h1M152,150.5h1M153,150.5h1M154,150.5h1M155,151.5h1M156,151.5h1M157,151.5h1M158,151.5h1M159,151.5h1M160,151.5h1M161,152.5h1M162,152.5h1M163,152.5h1M164,152.5h1M165,152.5h1M166,153.5h1M167,153.5h1M168,153.5h1M169,153.5h1M170,153.5h1M171,153.5h1M172,154.5h1M173,154.5h1M174,154.5h1M175,154.5h1M176,154.5h1M177,155.5h1M178,155.5h1M179,155.5h1M180,155.5h1M181,155.5h1M182,155.5h1M183,156.5h1M184,156.5h1M185,156.5h1M186,156.5h1M187,156.5h1M188,156.5h1M189,157.5h1M190,157.5h1M191,157.5h1M192,157.5h1M193,157.5h1M194,157.5h1M195,158.5h1M196,158.5h1M197,158.5h1M198,158.5h1M199,158.5h1M200,158.5h1M201,159.5h1M202,159.5h1M203,159.5h1M204,159.5h1M205,159.5h1M206,159.5h1M207,159.5h1M208,160.5h1M209,160.5h1M210,160.5h1M211,160.5h1M212,160.5h1M213,160.5h1M214,161.5h1M215,161.5h1M216,161.5h1M217,161.5h1M218,161.5h1M219,161.5h1M220,161.5h1M221,162.5h1M222,162.5h1M223,162.5h1M224,162.5h1M225,162.5h1M226,162.5h1M227,162.5h1M228,163.5h1M229,163.5h1M230,163.5h1M231,163.5h1M232,163.5h1M233,163.5h1M234,163.5h1M235,164.5h1M236,164.5h1M237,164.5h1M238,164.5h1M239,164.5h1M240,164.5h1M241,164.5h1M242,165.5h1M243,165.5h1M244,165.5h1M245,165.5h1M246,165.5h1M247,165.5h1M248,165.5h1M249,165.5h1M250,166.5h1M251,166.5h1M252,166.5h1M253,166.5h1M254,166.5h1M255,166.5h1M256,166.5h1M257,167.5h1M258,167.5h1M259,167.5h1M260,167.5h1M261,167.5h1M262,167.5h1M263,167.5h1M264,167.5h1M265,168.5h1M266,168.5h1M267,168.5h1M268,168.5h1M269,168.5h1M270,168.5h1M271,168.5h1M272,168.5h1M273,169.5h1M274,169.5h1M275,169.5h1M276,169.5h1M277,169.5h1M278,169.5h1M279,169.5h1M280,169.5h1M281,170.5h1M282,170.5h1M283,170.5h1M284,170.5h1M285,170.5h1M286,170.5h1M287,170.5h1M288,170.5h1M289,170.5h1M290,171.5h1M291,171.5h1M292,171.5h1M293,171.5h1M294,171.5h1M295,171.5h1M296,171.5h1M297,171.5h1M298,171.5h1M299,172.5h1M300,172.5h1M301,172.5h1M302,172.5h1M303,172.5h1M304,172.5h1M305,172.5h1M306,172.5h1M307,172.5h1M308,173.5h1M309,173.5h1M310,173.5h1M311,173.5h1M312,173.5h1M313,173.5h1M314,173.5h1M315,173.5h1M316,173.5h1M317,174.5h1M318,174.5h1M319,174.5h1M320,174.5h1M321,174.5h1M322,174.5h1M323,174.5h1M324,174.5h1M325,174.5h1M326,174.5h1M327,175.5h1M328,175.5h1M329,175.5h1M330,175.5h1M331,175.5h1M332,175.5h1M333,175.5h1M334,175.5h1M335,175.5h1M336,175.5h1M337,176.5h1M338,176.5h1M339,176.5h1M340,176.5h1M341,176.5h1M342,176.5h1M343,176.5h1M344,176.5h1M345,176.5h1M346,176.5h1M347,176.5h1M348,177.5h1M349,177.5h1M350,177.5h1M351,177.5h1M352,177.5h1M353,177.5h1M354,177.5h1M355,177.5h1M356,177.5h1M357,177.5h1M358,177.5h1M359,178.5h1M360,178.5h1M361,178.5h1M362,178.5h1M363,178.5h1M364,178.5h1M365,178.5h1M366,178.5h1M367,178.5h1M368,178.5h1M369,178.5h1M370,179.5h1M371,179.5h1M372,179.5h1M373,179.5h1M374,179.5h1M375,179.5h1M376,179.5h1M377,179.5h1M378,179.5h1M379,179.5h1M380,179.5h1M381,179.5h1M382,180.5h1M383,180.5h1M384,180.5h1M385,180.5h1M386,180.5h1M387,180.5h1M388,180.5h1M389,180.5h1M390,180.5h1M391,180.5h1M392,180.5h1M393,180.5h1M394,180.5h1M395,181.5h1M396,181.5h1M397,181.5h1M398,181.5h1M399,181.5h1M400,181.5h1M401,181.5h1M402,181.5h1M403,181.5h1M404,181.5h1M405,181.5h1M406,181.5h1M407,181.5h1M408,182.5h1M409,182.5h1M410,182.5h1M411,182.5h1M412,182.5h1M413,182.5h1M414,182.5h1M415,182.5h1M416,182.5h1M417,182.5h1M418,182.5h1M419,182.5h1M420,182.5h1M421,182.5h1M422,182.5h1M423,183.5h1M424,183.5h1M425,183.5h1M426,183.5h1M427,183.5h1M428,183.5h1M429,183.5h1M430,183.5h1M431,183.5h1M432,183.5h1M433,183.5h1M434,183.5h1M435,183.5h1M436,183.5h1M437,183.5h1M438,184.5h1M439,184.5h1M440,184.5h1M441,184.5h1M442,184.5h1M443,184.5h1M444,184.5h1M445,184.5h1M446,184.5h1M447,184.5h1M448,184.5h1M449,184.5h1M450,184.5h1M451,184.5h1M452,184.5h1M453,184.5h1M454,185.5h1M455,185.5h1M456,185.5h1M457,185.5h1M458,185.5h1M459,185.5h1M460,185.5h1M461,185.5h1M462,185.5h1M463,185.5h1M464,185.5h1M465,185.5h1M466,185.5h1M467,185.5h1M468,185.5h1M469,185.5h1M470,185.5h1M471,185.5h1M472,186.5h1M473,186.5h1M474,186.5h1M475,186.5h1M476,186.5h1M477,186.5h1M478,186.5h1M479,186.5h1M480,186.5h1M481,186.5h1M482,186.5h1M483,186.5h1M484,186.5h1M485,186.5h1M486,186.5h1M487,186.5h1M488,186.5h1M489,186.5h1M490,186.5h1M491,186.5h1M492,187.5h1M493,187.5h1M494,187.5h1M495,187.5h1M496,187.5h1M497,187.5h1M498,187.5h1M499,187.5h1M500,187.5h1M501,187.5h1M502,187.5h1M503,187.5h1M504,187.5h1M505,187.5h1M506,187.5h1M507,187.5h1M508,187.5h1M509,187.5h1M510,187.5h1M511,187.5h1M512,187.5h1M513,187.5h1M514,187.5h1M515,187.5h1M516,188.5h1M517,188.5h1M518,188.5h1M519,188.5h1M520,188.5h1M521,188.5h1M522,188.5h1M523,188.5h1M524,188.5h1M525,188.5h1M526,188.5h1M527,188.5h1M528,188.5h1M529,188.5h1M530,188.5h1M531,188.5h1M532,188.5h1M533,188.5h1M534,188.5h1M535,188.5h1M536,188.5h1M537,188.5h1M538,188.5h1M539,188.5h1M540,188.5h1M541,188.5h1M542,188.5h1M543,188.5h1M544,189.5h1M545,189.5h1M546,189.5h1M547,189.5h1M548,189.5h1M549,189.5h1M550,189.5h1M551,189.5h1M552,189.5h1M553,189.5h1M554,189.5h1M555,189.5h1M556,189.5h1M557,189.5h1M558,189.5h1M559,189.5h1M560,189.5h1M561,189.5h1M562,189.5h1M563,189.5h1M564,189.5h1M565,189.5h1M566,189.5h1M567,189.5h1M568,189.5h1M569,189.5h1M570,189.5h1M571,189.5h1M572,189.5h1M573,189.5h1M574,189.5h1M575,189.5h1M576,189.5h1M577,189.5h1M578,189.5h1M579,189.5h1M580,189.5h1M581,189.5h1M582,189.5h1M583,189.5h1M584,190.5h1M585,190.5h1M586,190.5h1M587,190.5h1M588,190.5h1M589,190.5h1M590,190.5h1M591,190.5h1M592,190.5h1M593,190.5h1M594,190.5h1M595,190.5h1M596,190.5h1M597,190.5h1M598,190.5h1M599,190.5h1M600,190.5h1M601,190.5h1M602,190.5h1M603,190.5h1M604,190.5h1M605,190.5h1M606,190.5h1M607,190.5h1M608,190.5h1M609,190.5h1M610,190.5h1M611,190.5h1M612,190.5h1M613,190.5h1M614,190.5h1M615,190.5h1M616,190.5h1M617,190.5h1M618,190.5h1M619,190.5h1M620,190.5h1M621,190.5h1M622,190.5h1M623,190.5h1M624,190.5h1M625,190.5h1M626,190.5h1M627,190.5h1M628,190.5h1M629,190.5h1M630,190.5h1M631,190.5h1M632,190.5h1M633,190.5h1M634,190.5h1M635,190.5h1M636,190.5h1M637,190.5h1M638,190.5h1M639,190.5h1M640,190.5h1M641,190.5h1M642,190.5h1M643,190.5h1M644,190.5h1M645,190.5h1M646,190.5h1M647,190.5h1M648,190.5h1M649,190.5h1M650,190.5h1M651,190.5h1M652,190.5h1M653,190.5h1M654,190.5h1M655,190.5h1M656,190.5h1M657,190.5h1M658,190.5h1M659,190.5h1M660,190.5h1M661,190.5h1M662,190.5h1M663,190.5h1M664,190.5h1M665,190.5h1M666,190.5h1M667,190.5h1M668,190.5h1M669,190.5h1M670,190.5h1M671,190.5h1M672,190.5h1M673,190.5h1M674,190.5h1M675,190.5h1M676,190.5h1M677,190.5h1M678,190.5h1M679,190.5h1M680,190.5h1M681,190.5h1M682,190.5h1M683,190.5h1M684,190.5h1M685,190.5h1M686,190.5h1M687,190.5h1M688,190.5h1M689,190.5h1M690,190.5h1M691,190.5h1M692,190.5h1M693,190.5h1M694,190.5h1M695,189.5h1M696,189.5h1M697,189.5h1M698,189.5h1M699,189.5h1M700,189.5h1M701,189.5h1M702,189.5h1M703,189.5h1M704,189.5h1M705,189.5h1M706,189.5h1M707,189.5h1M708,189.5h1M709,189.5h1M710,189.5h1M711,189.5h1M712,189.5h1M713,189.5h1M714,189.5h1M715,189.5h1M716,189.5h1M717,189.5h1M718,189.5h1M719,189.5h1M720,189.5h1M721,189.5h1M722,189.5h1M723,189.5h1M724,189.5h1M725,189.5h1M726,189.5h1M727,189.5h1M728,189.5h1M729,189.5h1M730,189.5h1M731,189.5h1M732,188.5h1M733,188.5h1M734,188.5h1M735,188.5h1M736,188.5h1M737,188.5h1M738,188.5h1M739,188.5h1M740,188.5h1M741,188.5h1M742,188.5h1M743,188.5h1M744,188.5h1M745,188.5h1M746,188.5h1M747,188.5h1M748,188.5h1M749,188.5h1M750,188.5h1M751,188.5h1M752,188.5h1M753,188.5h1M754,188.5h1M755,188.5h1M756,187.5h1M757,187.5h1M758,187.5h1M759,187.5h1M760,187.5h1M761,187.5h1M762,187.5h1M763,187.5h1M764,187.5h1M765,187.5h1M766,187.5h1M767,187.5h1M768,187.5h1M769,187.5h1M770,187.5h1M771,187.5h1M772,187.5h1M773,187.5h1M774,187.5h1M775,187.5h1M776,186.5h1M777,186.5h1M778,186.5h1M779,186.5h1M780,186.5h1M781,186.5h1M782,186.5h1M783,186.5h1M784,186.5h1M785,186.5h1M786,186.5h1M787,186.5h1M788,186.5h1M789,186.5h1M790,186.5h1M791,186.5h1M792,186.5h1M793,185.5h1M794,185.5h1M795,185.5h1M796,185.5h1M797,185.5h1M798,185.5h1M799,185.5h1M800,185.5h1M801,185.5h1M802,185.5h1M803,185.5h1M804,185.5h1M805,185.5h1M806,185.5h1M807,184.5h1M808,184.5h1M809,184.5h1M810,184.5h1M811,184.5h1M812,184.5h1M813,184.5h1M814,184.5h1M815,184.5h1M816,184.5h1M817,184.5h1M818,184.5h1M819,184.5h1M820,183.5h1M821,183.5h1M822,183.5h1M823,183.5h1M824,183.5h1M825,183.5h1M826,183.5h1M827,183.5h1M828,183.5h1M829,183.5h1M830,183.5h1M831,183.5h1M832,182.5h1M833,182.5h1M834,182.5h1M835,182.5h1M836,182.5h1M837,182.5h1M838,182.5h1M839,182.5h1M840,182.5h1M841,182.5h1M842,181.5h1M843,181.5h1M844,181.5h1M845,181.5h1M846,181.5h1M847,181.5h1M848,181.5h1M849,181.5h1M850,181.5h1M851,181.5h1M852,180.5h1M853,180.5h1M854,180.5h1M855,180.5h1M856,180.5h1M857,180.5h1M858,180.5h1M859,180.5h1M860,180.5h1M861,179.5h1M862,179.5h1M863,179.5h1M864,179.5h1M865,179.5h1M866,179.5h1M867,179.5h1M868,179.5h1M869,179.5h1M870,178.5h1M871,178.5h1M872,178.5h1M873,178.5h1M874,178.5h1M875,178.5h1M876,178.5h1M877,178.5h1M878,177.5h1M879,177.5h1M880,177.5h1M881,177.5h1M882,177.5h1M883,177.5h1M884,177.5h1M885,176.5h1M886,176.5h1M887,176.5h1M888,176.5h1M889,176.5h1M890,176.5h1M891,176.5h1M892,175.5h1M893,175.5h1M894,175.5h1M895,175.5h1M896,175.5h1M897,175.5h1M898,175.5h1M899,174.5h1M900,174.5h1M901,174.5h1M902,174.5h1M903,174.5h1M904,174.5h1M905,173.5h1M906,173.5h1M907,173.5h1M908,173.5h1M909,173.5h1M910,173.5h1M911,172.5h1M912,172.5h1M913,172.5h1M914,172.5h1M915,172.5h1M916,171.5h1M917,171.5h1M918,171.5h1M919,171.5h1M920,171.5h1M921,171.5h1M922,170.5h1M923,170.5h1M924,170.5h1M925,170.5h1M926,170.5h1M927,169.5h1M928,169.5h1M929,169.5h1M930,169.5h1M931,168.5h1M932,168.5h1M933,168.5h1M934,168.5h1M935,168.5h1M936,167.5h1M937,167.5h1M938,167.5h1M939,167.5h1M940,166.5h1M941,166.5h1M942,166.5h1M943,166.5h1M944,165.5h1M945,165.5h1M946,165.5h1M947,165.5h1M948,164.5h1M949,164.5h1M950,164.5h1M951,164.5h1M952,163.5h1M953,163.5h1M954,163.5h1M955,162.5h1M956,162.5h1M957,162.5h1M958,162.5h1M959,161.5h1M960,161.5h1M961,161.5h1M962,160.5h1M963,160.5h1M964,160.5h1M965,159.5h1M966,159.5h1M967,159.5h1M968,158.5h1M969,158.5h1M970,157.5h1M971,157.5h1M972,157.5h1M973,156.5h1M974,156.5h1M975,155.5h1M976,155.5h1M977,155.5h1M978,154.5h1M979,154.5h1M980,153.5h1M981,153.5h1M982,152.5h1M983,152.5h1M984,151.5h1M985,150.5h1M986,150.5h1M987,149.5h1M988,148.5h1M989,148.5h1M990,147.5h1M991,146.5h1M992,145.5h1M993,144.5h1M994,143.5h1M995,142.5h1M996,141.5h1M997.5,139.5V141.5M997,139.5h1M998.5,134.5V139.5M998,134.5h1" fill="none" stroke="#f4fbf4" stroke-width="1"/><line x1="7" y1="91" x2="998" y2="134" stroke="#40e040" stroke-width="1.2"/><rect x="6" y="91" width="2" height="111" fill="#4a0a5a"/><rect x="997" y="134" width="2" height="20" fill="#400a70"/></svg><div style="left:0px;top:2px;width:1005px;height:1px;background:#404040"></div><div style="left:0px;top:2px;width:1px;height:258px;background:#404040"></div><div style="left:0px;top:260px;width:1006px;height:1px;background:#d4d4d4"></div><div style="left:1005px;top:2px;width:1px;height:259px;background:#d4d4d4"></div><div style="left:0px;top:261px;width:1005px;height:1px;background:#cccccc"></div><div style="left:0px;top:262px;width:1005px;height:1px;background:#404040"></div><div style="left:0px;top:262px;width:1px;height:22px;background:#404040"></div><div style="left:0px;top:284px;width:1006px;height:1px;background:#d4d4d4"></div><div style="left:1005px;top:262px;width:1px;height:23px;background:#d4d4d4"></div><div class="t" style="left:0px;top:263px;width:1005px;height:20px;line-height:20px;text-align:center;font-weight:bold;">Radio link study 3</div><div style="left:0px;top:286px;width:515px;height:1px;background:#404040"></div><div style="left:0px;top:286px;width:1px;height:156px;background:#404040"></div><div style="left:0px;top:442px;width:516px;height:1px;background:#d4d4d4"></div><div style="left:515px;top:286px;width:1px;height:157px;background:#d4d4d4"></div><div style="left:517px;top:286px;width:488px;height:1px;background:#404040"></div><div style="left:517px;top:286px;width:1px;height:156px;background:#404040"></div><div style="left:517px;top:442px;width:489px;height:1px;background:#d4d4d4"></div><div style="left:1005px;top:286px;width:1px;height:157px;background:#d4d4d4"></div><div class="t" style="left:2px;top:287px;width:500px;height:20px;line-height:20px;text-align:left;"><a>Semechevo</a> (1)</div><div class="t" style="left:517px;top:287px;width:486px;height:20px;line-height:20px;text-align:right;">(2) <a>WM</a></div><div style="left:2px;top:308px;width:203px;height:20px;background:#e0e0e0"></div><div class="t" style="left:5px;top:308px;width:201px;height:20px;line-height:20px;text-align:left;">Latitude</div><div style="left:207px;top:308px;width:278px;height:20px;background:#e0e0e0"></div><div class="t" style="left:207px;top:308px;width:276px;height:20px;line-height:20px;text-align:right;">55.206519</div><div style="left:486px;top:308px;width:26px;height:20px;background:#e0e0e0"></div><div class="t" style="left:487.5px;top:308px;width:24px;height:20px;line-height:20px;text-align:left;">°</div><div style="left:2px;top:330px;width:203px;height:20px;background:#b0b0b0"></div><div class="t" style="left:5px;top:330px;width:201px;height:20px;line-height:20px;text-align:left;">Longitude</div><div style="left:207px;top:330px;width:278px;height:20px;background:#b0b0b0"></div><div class="t" style="left:207px;top:330px;width:276px;height:20px;line-height:20px;text-align:right;">36.070962</div><div style="left:486px;top:330px;width:26px;height:20px;background:#b0b0b0"></div><div class="t" style="left:487.5px;top:330px;width:24px;height:20px;line-height:20px;text-align:left;">°</div><div style="left:2px;top:352px;width:203px;height:20px;background:#e0e0e0"></div><div class="t" style="left:5px;top:352px;width:201px;height:20px;line-height:20px;text-align:left;">Ground elevation</div><div style="left:207px;top:352px;width:278px;height:20px;background:#e0e0e0"></div><div class="t" style="left:207px;top:352px;width:276px;height:20px;line-height:20px;text-align:right;">201.2</div><div style="left:486px;top:352px;width:26px;height:20px;background:#e0e0e0"></div><div class="t" style="left:487.5px;top:352px;width:24px;height:20px;line-height:20px;text-align:left;">m</div><div style="left:2px;top:374px;width:203px;height:20px;background:#b0b0b0"></div><div class="t" style="left:5px;top:374px;width:201px;height:20px;line-height:20px;text-align:left;">Antenna height</div><div style="left:207px;top:374px;width:278px;height:20px;background:#b0b0b0"></div><div class="t" style="left:207px;top:374px;width:276px;height:20px;line-height:20px;text-align:right;">40.0</div><div style="left:486px;top:374px;width:26px;height:20px;background:#b0b0b0"></div><div class="t" style="left:487.5px;top:374px;width:24px;height:20px;line-height:20px;text-align:left;">m</div><div style="left:2px;top:396px;width:203px;height:20px;background:#e0e0e0"></div><div class="t" style="left:5px;top:396px;width:201px;height:20px;line-height:20px;text-align:left;">Azimuth</div><div style="left:207px;top:396px;width:278px;height:20px;background:#e0e0e0"></div><div class="t" style="left:207px;top:396px;width:276px;height:20px;line-height:20px;text-align:right;">215.83 TN | 205.16 MG</div><div style="left:486px;top:396px;width:26px;height:20px;background:#e0e0e0"></div><div class="t" style="left:487.5px;top:396px;width:24px;height:20px;line-height:20px;text-align:left;">°</div><div style="left:2px;top:418px;width:203px;height:20px;background:#b0b0b0"></div><div class="t" style="left:5px;top:418px;width:201px;height:20px;line-height:20px;text-align:left;">Tilt</div><div style="left:207px;top:418px;width:278px;height:20px;background:#b0b0b0"></div><div class="t" style="left:207px;top:418px;width:276px;height:20px;line-height:20px;text-align:right;">-0.15</div><div style="left:486px;top:418px;width:26px;height:20px;background:#b0b0b0"></div><div class="t" style="left:487.5px;top:418px;width:24px;height:20px;line-height:20px;text-align:left;">°</div><div style="left:520px;top:308px;width:203px;height:20px;background:#e0e0e0"></div><div class="t" style="left:523px;top:308px;width:201px;height:20px;line-height:20px;text-align:left;">Latitude</div><div style="left:725px;top:308px;width:249px;height:20px;background:#e0e0e0"></div><div class="t" style="left:725px;top:308px;width:247px;height:20px;line-height:20px;text-align:right;">55.153386</div><div style="left:975px;top:308px;width:26px;height:20px;background:#e0e0e0"></div><div class="t" style="left:976.5px;top:308px;width:24px;height:20px;line-height:20px;text-align:left;">°</div><div style="left:520px;top:330px;width:203px;height:20px;background:#b0b0b0"></div><div class="t" style="left:523px;top:330px;width:201px;height:20px;line-height:20px;text-align:left;">Longitude</div><div style="left:725px;top:330px;width:249px;height:20px;background:#b0b0b0"></div><div class="t" style="left:725px;top:330px;width:247px;height:20px;line-height:20px;text-align:right;">36.003850</div><div style="left:975px;top:330px;width:26px;height:20px;background:#b0b0b0"></div><div class="t" style="left:976.5px;top:330px;width:24px;height:20px;line-height:20px;text-align:left;">°</div><div style="left:520px;top:352px;width:203px;height:20px;background:#e0e0e0"></div><div class="t" style="left:523px;top:352px;width:201px;height:20px;line-height:20px;text-align:left;">Ground elevation</div><div style="left:725px;top:352px;width:249px;height:20px;background:#e0e0e0"></div><div class="t" style="left:725px;top:352px;width:247px;height:20px;line-height:20px;text-align:right;">218.7</div><div style="left:975px;top:352px;width:26px;height:20px;background:#e0e0e0"></div><div class="t" style="left:976.5px;top:352px;width:24px;height:20px;line-height:20px;text-align:left;">m</div><div style="left:520px;top:374px;width:203px;height:20px;background:#b0b0b0"></div><div class="t" style="left:523px;top:374px;width:201px;height:20px;line-height:20px;text-align:left;">Antenna height</div><div style="left:725px;top:374px;width:249px;height:20px;background:#b0b0b0"></div><div class="t" style="left:725px;top:374px;width:247px;height:20px;line-height:20px;text-align:right;">7.0</div><div style="left:975px;top:374px;width:26px;height:20px;background:#b0b0b0"></div><div class="t" style="left:976.5px;top:374px;width:24px;height:20px;line-height:20px;text-align:left;">m</div><div style="left:520px;top:396px;width:203px;height:20px;background:#e0e0e0"></div><div class="t" style="left:523px;top:396px;width:201px;height:20px;line-height:20px;text-align:left;">Azimuth</div><div style="left:725px;top:396px;width:249px;height:20px;background:#e0e0e0"></div><div class="t" style="left:725px;top:396px;width:247px;height:20px;line-height:20px;text-align:right;">35.77 TN | 25.14 MG</div><div style="left:975px;top:396px;width:26px;height:20px;background:#e0e0e0"></div><div class="t" style="left:976.5px;top:396px;width:24px;height:20px;line-height:20px;text-align:left;">°</div><div style="left:520px;top:418px;width:203px;height:20px;background:#b0b0b0"></div><div class="t" style="left:523px;top:418px;width:201px;height:20px;line-height:20px;text-align:left;">Tilt</div><div style="left:725px;top:418px;width:249px;height:20px;background:#b0b0b0"></div><div class="t" style="left:725px;top:418px;width:247px;height:20px;line-height:20px;text-align:right;">0.09</div><div style="left:975px;top:418px;width:26px;height:20px;background:#b0b0b0"></div><div class="t" style="left:976.5px;top:418px;width:24px;height:20px;line-height:20px;text-align:left;">°</div><div style="left:0px;top:444px;width:515px;height:1px;background:#404040"></div><div style="left:0px;top:444px;width:1px;height:156px;background:#404040"></div><div style="left:0px;top:600px;width:516px;height:1px;background:#d4d4d4"></div><div style="left:515px;top:444px;width:1px;height:157px;background:#d4d4d4"></div><div style="left:517px;top:444px;width:488px;height:1px;background:#404040"></div><div style="left:517px;top:444px;width:1px;height:156px;background:#404040"></div><div style="left:517px;top:600px;width:489px;height:1px;background:#d4d4d4"></div><div style="left:1005px;top:444px;width:1px;height:157px;background:#d4d4d4"></div><div class="t" style="left:2px;top:445px;width:500px;height:20px;line-height:20px;text-align:left;font-weight:bold;">Radio system</div><div class="t" style="left:517px;top:445px;width:486px;height:20px;line-height:20px;text-align:right;font-weight:bold;">Propagation</div><div style="left:2px;top:466px;width:287px;height:20px;background:#e0e0e0"></div><div class="t" style="left:5px;top:466px;width:285px;height:20px;line-height:20px;text-align:left;">TX power</div><div style="left:291px;top:466px;width:133px;height:20px;background:#e0e0e0"></div><div class="t" style="left:291px;top:466px;width:131px;height:20px;line-height:20px;text-align:right;">43.01</div><div style="left:425px;top:466px;width:87px;height:20px;background:#e0e0e0"></div><div class="t" style="left:426.5px;top:466px;width:85px;height:20px;line-height:20px;text-align:left;">dBm</div><div style="left:2px;top:488px;width:287px;height:20px;background:#b0b0b0"></div><div class="t" style="left:5px;top:488px;width:285px;height:20px;line-height:20px;text-align:left;">TX line loss</div><div style="left:291px;top:488px;width:133px;height:20px;background:#b0b0b0"></div><div class="t" style="left:291px;top:488px;width:131px;height:20px;line-height:20px;text-align:right;">3.00</div><div style="left:425px;top:488px;width:87px;height:20px;background:#b0b0b0"></div><div class="t" style="left:426.5px;top:488px;width:85px;height:20px;line-height:20px;text-align:left;">dB</div><div style="left:2px;top:510px;width:287px;height:20px;background:#e0e0e0"></div><div class="t" style="left:5px;top:510px;width:285px;height:20px;line-height:20px;text-align:left;">TX antenna gain</div><div style="left:291px;top:510px;width:133px;height:20px;background:#e0e0e0"></div><div class="t" style="left:291px;top:510px;width:131px;height:20px;line-height:20px;text-align:right;">16.00</div><div style="left:425px;top:510px;width:87px;height:20px;background:#e0e0e0"></div><div class="t" style="left:426.5px;top:510px;width:85px;height:20px;line-height:20px;text-align:left;">dBi</div><div style="left:2px;top:532px;width:287px;height:20px;background:#b0b0b0"></div><div class="t" style="left:5px;top:532px;width:285px;height:20px;line-height:20px;text-align:left;">RX antenna gain</div><div style="left:291px;top:532px;width:133px;height:20px;background:#b0b0b0"></div><div class="t" style="left:291px;top:532px;width:131px;height:20px;line-height:20px;text-align:right;">20.00</div><div style="left:425px;top:532px;width:87px;height:20px;background:#b0b0b0"></div><div class="t" style="left:426.5px;top:532px;width:85px;height:20px;line-height:20px;text-align:left;">dBi</div><div style="left:2px;top:554px;width:287px;height:20px;background:#e0e0e0"></div><div class="t" style="left:5px;top:554px;width:285px;height:20px;line-height:20px;text-align:left;">RX line loss</div><div style="left:291px;top:554px;width:133px;height:20px;background:#e0e0e0"></div><div class="t" style="left:291px;top:554px;width:131px;height:20px;line-height:20px;text-align:right;">0.50</div><div style="left:425px;top:554px;width:87px;height:20px;background:#e0e0e0"></div><div class="t" style="left:426.5px;top:554px;width:85px;height:20px;line-height:20px;text-align:left;">dB</div><div style="left:2px;top:576px;width:287px;height:20px;background:#b0b0b0"></div><div class="t" style="left:5px;top:576px;width:285px;height:20px;line-height:20px;text-align:left;">RX sensitivity</div><div style="left:291px;top:576px;width:133px;height:20px;background:#b0b0b0"></div><div class="t" style="left:291px;top:576px;width:131px;height:20px;line-height:20px;text-align:right;">-113.02</div><div style="left:425px;top:576px;width:87px;height:20px;background:#b0b0b0"></div><div class="t" style="left:426.5px;top:576px;width:85px;height:20px;line-height:20px;text-align:left;">dBm</div><div style="left:520px;top:466px;width:294px;height:20px;background:#e0e0e0"></div><div class="t" style="left:523px;top:466px;width:292px;height:20px;line-height:20px;text-align:left;">Free space loss</div><div style="left:816px;top:466px;width:127px;height:20px;background:#e0e0e0"></div><div class="t" style="left:816px;top:466px;width:125px;height:20px;line-height:20px;text-align:right;">116.88</div><div style="left:944px;top:466px;width:57px;height:20px;background:#e0e0e0"></div><div class="t" style="left:945.5px;top:466px;width:55px;height:20px;line-height:20px;text-align:left;">dB</div><div style="left:520px;top:488px;width:294px;height:20px;background:#b0b0b0"></div><div class="t" style="left:523px;top:488px;width:292px;height:20px;line-height:20px;text-align:left;">Obstruction loss</div><div style="left:816px;top:488px;width:127px;height:20px;background:#b0b0b0"></div><div class="t" style="left:816px;top:488px;width:125px;height:20px;line-height:20px;text-align:right;">4.04</div><div style="left:944px;top:488px;width:57px;height:20px;background:#b0b0b0"></div><div class="t" style="left:945.5px;top:488px;width:55px;height:20px;line-height:20px;text-align:left;">dB</div><div style="left:520px;top:510px;width:294px;height:20px;background:#e0e0e0"></div><div class="t" style="left:523px;top:510px;width:292px;height:20px;line-height:20px;text-align:left;">Forest loss</div><div style="left:816px;top:510px;width:127px;height:20px;background:#e0e0e0"></div><div class="t" style="left:816px;top:510px;width:125px;height:20px;line-height:20px;text-align:right;">4.69</div><div style="left:944px;top:510px;width:57px;height:20px;background:#e0e0e0"></div><div class="t" style="left:945.5px;top:510px;width:55px;height:20px;line-height:20px;text-align:left;">dB</div><div style="left:520px;top:532px;width:294px;height:20px;background:#b0b0b0"></div><div class="t" style="left:523px;top:532px;width:292px;height:20px;line-height:20px;text-align:left;">Urban loss</div><div style="left:816px;top:532px;width:127px;height:20px;background:#b0b0b0"></div><div class="t" style="left:816px;top:532px;width:125px;height:20px;line-height:20px;text-align:right;">0.00</div><div style="left:944px;top:532px;width:57px;height:20px;background:#b0b0b0"></div><div class="t" style="left:945.5px;top:532px;width:55px;height:20px;line-height:20px;text-align:left;">dB</div><div style="left:520px;top:554px;width:294px;height:20px;background:#e0e0e0"></div><div class="t" style="left:523px;top:554px;width:292px;height:20px;line-height:20px;text-align:left;">Statistical loss</div><div style="left:816px;top:554px;width:127px;height:20px;background:#e0e0e0"></div><div class="t" style="left:816px;top:554px;width:125px;height:20px;line-height:20px;text-align:right;">21.19</div><div style="left:944px;top:554px;width:57px;height:20px;background:#e0e0e0"></div><div class="t" style="left:945.5px;top:554px;width:55px;height:20px;line-height:20px;text-align:left;">dB</div><div style="left:520px;top:576px;width:294px;height:20px;background:#b0b0b0"></div><div class="t" style="left:523px;top:576px;width:292px;height:20px;line-height:20px;text-align:left;">Total path loss</div><div style="left:816px;top:576px;width:127px;height:20px;background:#b0b0b0"></div><div class="t" style="left:816px;top:576px;width:125px;height:20px;line-height:20px;text-align:right;">146.81</div><div style="left:944px;top:576px;width:57px;height:20px;background:#b0b0b0"></div><div class="t" style="left:945.5px;top:576px;width:55px;height:20px;line-height:20px;text-align:left;">dB</div><div style="left:0px;top:602px;width:1005px;height:1px;background:#404040"></div><div style="left:0px;top:602px;width:1px;height:224px;background:#404040"></div><div style="left:1005px;top:602px;width:1px;height:224px;background:#d4d4d4"></div><div class="t" style="left:2px;top:603px;width:500px;height:20px;line-height:20px;text-align:left;font-weight:bold;">Performance</div><div style="left:2px;top:624px;width:727px;height:20px;background:#e0e0e0"></div><div class="t" style="left:5px;top:624px;width:725px;height:20px;line-height:20px;text-align:left;font-weight:bold;">Distance</div><div style="left:731px;top:624px;width:172px;height:20px;background:#e0e0e0"></div><div class="t" style="left:731px;top:624px;width:170px;height:20px;line-height:20px;text-align:right;font-weight:bold;">7.284</div><div style="left:904px;top:624px;width:97px;height:20px;background:#e0e0e0"></div><div class="t" style="left:905.5px;top:624px;width:95px;height:20px;line-height:20px;text-align:left;font-weight:bold;">km</div><div style="left:2px;top:646px;width:727px;height:20px;background:#b0b0b0"></div><div class="t" style="left:5px;top:646px;width:725px;height:20px;line-height:20px;text-align:left;">Precision</div><div style="left:731px;top:646px;width:172px;height:20px;background:#b0b0b0"></div><div class="t" style="left:731px;top:646px;width:170px;height:20px;line-height:20px;text-align:right;">10.0</div><div style="left:904px;top:646px;width:97px;height:20px;background:#b0b0b0"></div><div class="t" style="left:905.5px;top:646px;width:95px;height:20px;line-height:20px;text-align:left;">m</div><div style="left:2px;top:668px;width:727px;height:20px;background:#e0e0e0"></div><div class="t" style="left:5px;top:668px;width:725px;height:20px;line-height:20px;text-align:left;">Frequency</div><div style="left:731px;top:668px;width:172px;height:20px;background:#e0e0e0"></div><div class="t" style="left:731px;top:668px;width:170px;height:20px;line-height:20px;text-align:right;">2300.000</div><div style="left:904px;top:668px;width:97px;height:20px;background:#e0e0e0"></div><div class="t" style="left:905.5px;top:668px;width:95px;height:20px;line-height:20px;text-align:left;">MHz</div><div style="left:2px;top:690px;width:727px;height:20px;background:#b0b0b0"></div><div class="t" style="left:5px;top:690px;width:725px;height:20px;line-height:20px;text-align:left;">Equivalent Isotropically Radiated Power</div><div style="left:731px;top:690px;width:172px;height:20px;background:#b0b0b0"></div><div class="t" style="left:731px;top:690px;width:170px;height:20px;line-height:20px;text-align:right;">399.052</div><div style="left:904px;top:690px;width:97px;height:20px;background:#b0b0b0"></div><div class="t" style="left:905.5px;top:690px;width:95px;height:20px;line-height:20px;text-align:left;">W</div><div style="left:2px;top:712px;width:727px;height:20px;background:#e0e0e0"></div><div class="t" style="left:5px;top:712px;width:725px;height:20px;line-height:20px;text-align:left;">System gain</div><div style="left:731px;top:712px;width:172px;height:20px;background:#e0e0e0"></div><div class="t" style="left:731px;top:712px;width:170px;height:20px;line-height:20px;text-align:right;">188.53</div><div style="left:904px;top:712px;width:97px;height:20px;background:#e0e0e0"></div><div class="t" style="left:905.5px;top:712px;width:95px;height:20px;line-height:20px;text-align:left;">dB</div><div style="left:2px;top:734px;width:727px;height:20px;background:#b0b0b0"></div><div class="t" style="left:5px;top:734px;width:725px;height:20px;line-height:20px;text-align:left;">Required reliability</div><div style="left:731px;top:734px;width:172px;height:20px;background:#b0b0b0"></div><div class="t" style="left:731px;top:734px;width:170px;height:20px;line-height:20px;text-align:right;">95.000</div><div style="left:904px;top:734px;width:97px;height:20px;background:#b0b0b0"></div><div class="t" style="left:905.5px;top:734px;width:95px;height:20px;line-height:20px;text-align:left;">%</div><div style="left:2px;top:756px;width:727px;height:20px;background:#e0e0e0"></div><div class="t" style="left:5px;top:756px;width:725px;height:20px;line-height:20px;text-align:left;">Received Signal</div><div style="left:731px;top:756px;width:172px;height:20px;background:#e0e0e0"></div><div class="t" style="left:731px;top:756px;width:170px;height:20px;line-height:20px;text-align:right;">-71.30</div><div style="left:904px;top:756px;width:97px;height:20px;background:#e0e0e0"></div><div class="t" style="left:905.5px;top:756px;width:95px;height:20px;line-height:20px;text-align:left;">dBm</div><div style="left:2px;top:778px;width:727px;height:20px;background:#b0b0b0"></div><div class="t" style="left:5px;top:778px;width:725px;height:20px;line-height:20px;text-align:left;">Received Signal</div><div style="left:731px;top:778px;width:172px;height:20px;background:#b0b0b0"></div><div class="t" style="left:731px;top:778px;width:170px;height:20px;line-height:20px;text-align:right;">60.94</div><div style="left:904px;top:778px;width:97px;height:20px;background:#b0b0b0"></div><div class="t" style="left:905.5px;top:778px;width:95px;height:20px;line-height:20px;text-align:left;">µV</div><div style="left:2px;top:800px;width:727px;height:20px;background:#e0e0e0"></div><div class="t" style="left:5px;top:800px;width:725px;height:20px;line-height:20px;text-align:left;font-weight:bold;">Fade Margin</div><div style="left:731px;top:800px;width:172px;height:20px;background:#e0e0e0"></div><div class="t" style="left:731px;top:800px;width:170px;height:20px;line-height:20px;text-align:right;font-weight:bold;">41.72</div><div style="left:904px;top:800px;width:97px;height:20px;background:#e0e0e0"></div><div class="t" style="left:905.5px;top:800px;width:95px;height:20px;line-height:20px;text-align:left;font-weight:bold;">dB</div><div style="left:0px;top:826px;width:1005px;height:1px;background:#404040"></div><div style="left:0px;top:827px;width:1008px;height:1px;background:#c8c8c8"></div><div style="left:1007px;top:0px;width:1px;height:828px;background:#383838"></div></body></html>
